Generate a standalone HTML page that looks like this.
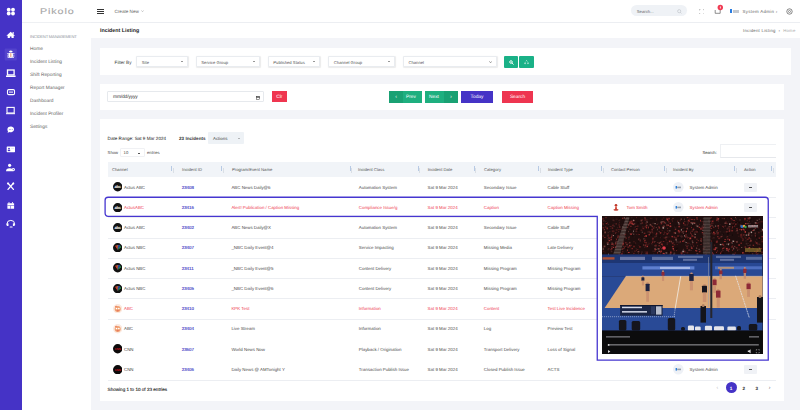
<!DOCTYPE html>
<html><head><meta charset="utf-8">
<style>
*{box-sizing:border-box;margin:0;padding:0}
html,body{width:800px;height:410px;overflow:hidden;background:#f3f4f8;font-family:"Liberation Sans",sans-serif;color:#444;text-rendering:geometricPrecision}
.a{position:absolute}
.t{position:absolute;white-space:nowrap;line-height:6px;height:6px}
#side{left:0;top:0;width:22px;height:410px;background:#4533c6}
#side2{left:22px;top:0;width:69px;height:410px;background:#fff}
#hdr{left:91px;top:0;width:709px;height:23px;background:#fff;border-bottom:1px solid #eceef2}
#title{left:91px;top:23px;width:709px;height:15px;background:#fff}
.card{position:absolute;background:#fff}
.sel{position:absolute;background:#fff;border:0.5px solid #e9ecf0;border-radius:1px;box-shadow:0.3px 0.6px 1px rgba(0,0,0,0.08)}
.sel span{position:absolute;left:4.8px;top:3.3px;font-size:4.2px;line-height:6px;color:#555;white-space:nowrap}
.sel i{position:absolute;right:4px;top:50%;margin-top:-0.5px;width:0;height:0;border-left:1.4px solid transparent;border-right:1.4px solid transparent;border-top:1.8px solid #333}
.btn{position:absolute;color:#fff;font-size:4.8px;line-height:11.4px;text-align:center;white-space:nowrap}
.menu .t{font-size:4.8px;color:#5f5f5f;left:8px}
.row{position:absolute;left:0;top:0;width:800px;height:0}
.c{position:absolute;top:-2.3px;font-size:4.4px;line-height:6px;white-space:nowrap}
.sep{position:absolute;left:107.6px;width:668.4px;height:0.6px;background:#eceef2}
.act{position:absolute;width:13.2px;height:9px;background:#f0f2f6;border-radius:1px}
.act i{position:absolute;left:5.4px;top:4.2px;width:2.6px;height:0.6px;background:#555}
.thd{position:absolute;left:0;top:0;width:800px;height:0}
.h{position:absolute;top:-3px;font-size:4.2px;line-height:6px;white-space:nowrap;color:#555}
.srt{position:absolute;top:-3.5px;width:2.6px;height:7px;background:linear-gradient(#7c9fd0,#7c9fd0) 0 0/0.5px 5px no-repeat,linear-gradient(#c3c9d2,#c3c9d2) 1.6px 2px/0.5px 5px no-repeat}
</style></head><body>
<!-- icon sidebar -->
<div id="side" class="a">
<svg class="a" style="left:0;top:0" width="22" height="240" viewBox="0 0 22 240">
  <g fill="#fff">
    <!-- logo -->
    <circle cx="8.7" cy="9.7" r="1.9"/><circle cx="13" cy="9.7" r="1.9"/>
    <circle cx="8.7" cy="13.5" r="1.9"/><circle cx="13" cy="13.5" r="1.9"/>
    <!-- home -->
    <path d="M6.4 35.7 L10.7 31.8 L15 35.7 L13.7 35.7 L13.7 38.1 L11.5 38.1 L11.5 36.6 L9.9 36.6 L9.9 38.1 L7.7 38.1 L7.7 35.7 Z"/><rect x="12.6" y="32" width="1.1" height="2.2"/>
  </g>
  <!-- bug active -->
  <rect x="4.7" y="48.5" width="12.1" height="12.1" rx="1" fill="#5343cc"/>
  <g fill="#fff">
    <path d="M9 51.4 Q10.8 49.6 12.6 51.4 L12.6 52 L9 52Z"/>
    <rect x="8.6" y="52.4" width="4.4" height="5.2" rx="1.8"/>
    <rect x="7.1" y="53.4" width="7.4" height="0.8"/>
    <rect x="7.1" y="55.6" width="7.4" height="0.8"/>
    <rect x="7.6" y="57.2" width="6.4" height="0.7"/>
  </g>
  <rect x="10.45" y="53.2" width="0.8" height="3.8" fill="#e0704a"/>
  <!-- laptop -->
  <rect x="7.5" y="70" width="6.6" height="4.9" fill="none" stroke="#fff" stroke-width="1.3"/>
  <path d="M6 75.4 H15.6 V76.4 Q15.6 76.9 15.1 76.9 H6.5 Q6 76.9 6 76.4Z" fill="#fff"/>
  <!-- router card -->
  <rect x="7.5" y="89.6" width="7" height="5" rx="1.2" fill="none" stroke="#fff" stroke-width="1.1"/>
  <rect x="9" y="91.6" width="4" height="1" fill="#fff"/>
  <!-- monitor -->
  <rect x="7" y="107.4" width="7.2" height="5.6" fill="none" stroke="#fff" stroke-width="1.1"/>
  <rect x="6" y="113.2" width="9" height="1" fill="#fff"/>
  <!-- chat -->
  <path d="M7.4 129.3 a3.35 2.9 0 1 1 1.8 2.6 L7.6 133 L8 131.4 a3 2.9 0 0 1 -0.6 -2.1Z" fill="#fff"/>
  <circle cx="9.3" cy="129.4" r="0.45" fill="#4533c6"/><circle cx="10.8" cy="129.4" r="0.45" fill="#4533c6"/><circle cx="12.3" cy="129.4" r="0.45" fill="#4533c6"/>
  <!-- id card -->
  <rect x="6.7" y="146.4" width="8.3" height="5.8" rx="0.6" fill="#fff"/>
  <circle cx="9" cy="148.6" r="0.9" fill="#4533c6"/>
  <rect x="7.8" y="149.8" width="2.4" height="1.3" fill="#4533c6"/>
  <rect x="11.2" y="148" width="2.8" height="0.6" fill="#d8d4f5"/>
  <!-- user gear -->
  <circle cx="9.6" cy="165.3" r="1.6" fill="#fff"/>
  <path d="M6 171.2 a3.6 3 0 0 1 7.2 0Z" fill="#fff"/>
  <circle cx="13.3" cy="169.6" r="1.7" fill="#fff"/>
  <circle cx="13.3" cy="169.6" r="0.6" fill="#4533c6"/>
  <!-- tools -->
  <g stroke="#fff" stroke-width="1.3" stroke-linecap="round">
    <line x1="8" y1="183.2" x2="13.4" y2="189.4"/>
    <line x1="13.4" y1="183.2" x2="8" y2="189.4"/>
  </g>
  <circle cx="8" cy="183.4" r="1" fill="#fff"/><circle cx="13.3" cy="183.4" r="1" fill="#fff"/>
  <!-- calendar -->
  <rect x="7.4" y="203.2" width="6.7" height="5.6" rx="0.5" fill="#fff"/>
  <rect x="8.6" y="202" width="0.8" height="1.6" fill="#fff"/><rect x="12.1" y="202" width="0.8" height="1.6" fill="#fff"/>
  <rect x="7.4" y="205.2" width="6.7" height="0.5" fill="#4533c6"/>
  <rect x="10.5" y="205.7" width="0.5" height="3.1" fill="#4533c6"/>
  <!-- support -->
  <path d="M7 225 v-1.2 a3.8 3.4 0 0 1 7.6 0 v1.2" fill="none" stroke="#fff" stroke-width="1"/>
  <rect x="6.7" y="223.3" width="1.8" height="2.8" rx="0.5" fill="#fff"/>
  <rect x="12.9" y="223.3" width="1.8" height="2.8" rx="0.5" fill="#fff"/>
  <rect x="9.6" y="226.5" width="3" height="1.1" rx="0.5" fill="#fff"/>
</svg>
</div>
<div id="side2" class="a menu">
  <div class="t" style="left:18px;top:7px;font-size:8.4px;line-height:8px;height:8px;color:#a6a6a6;letter-spacing:0.7px;transform:scaleX(1.28);transform-origin:0 0;-webkit-text-stroke:0.1px #a6a6a6">Pikolo</div>
  <div class="a" style="left:0;top:22px;width:69px;height:1px;background:#eef0f3"></div>
  <div class="t" style="top:34px;font-size:4.1px;color:#8a8f98;letter-spacing:-0.17px">INCIDENT MANAGEMENT</div>
  <div class="t" style="top:47.2px">Home</div>
  <div class="t" style="top:60.1px">Incident Listing</div>
  <div class="t" style="top:73px">Shift Reporting</div>
  <div class="t" style="top:85.8px">Report Manager</div>
  <div class="t" style="top:98.7px">Dashboard</div>
  <div class="t" style="top:111.6px">Incident Profiler</div>
  <div class="t" style="top:124.5px">Settings</div>
</div>
<!-- header -->
<div id="hdr" class="a">
  <div class="a" style="left:6px;top:9px;width:6.5px;height:1px;background:#333"></div>
  <div class="a" style="left:6px;top:11.2px;width:6.5px;height:1px;background:#333"></div>
  <div class="a" style="left:6px;top:13.4px;width:6.5px;height:1px;background:#333"></div>
  <div class="t" style="left:23.5px;top:9.2px;font-size:4.6px;color:#666">Create New</div><svg class="a" style="left:49.8px;top:10.2px" width="3" height="2.2" viewBox="0 0 3 2.2"><path d="M0.3 0.4 L1.5 1.7 L2.7 0.4" fill="none" stroke="#888" stroke-width="0.45"/></svg>
  <div class="a" style="left:540px;top:5.4px;width:55.5px;height:11px;border-radius:5.5px;background:#eff2f6"></div>
  <div class="t" style="left:545.8px;top:8.6px;font-size:4.2px;color:#666">Search...</div>
  <svg class="a" style="left:586.2px;top:8.6px" width="5" height="5" viewBox="0 0 5 5"><circle cx="2.2" cy="2.2" r="1.6" fill="none" stroke="#b5b9bf" stroke-width="0.5"/><line x1="3.3" y1="3.3" x2="4.5" y2="4.5" stroke="#b5b9bf" stroke-width="0.5"/></svg>
  <svg class="a" style="left:607.5px;top:8.7px" width="5.5" height="5.5" viewBox="0 0 5.5 5.5"><path d="M0.3 1.5 V0.3 H1.5 M4 0.3 H5.2 V1.5 M5.2 4 V5.2 H4 M1.5 5.2 H0.3 V4" fill="none" stroke="#8a8a8a" stroke-width="0.5"/></svg>
  <svg class="a" style="left:623px;top:3.5px" width="10" height="11" viewBox="0 0 10 11"><path d="M1.2 6 V9.3 H6.2 V6" fill="none" stroke="#444" stroke-width="0.6"/><circle cx="6.3" cy="3.5" r="2.7" fill="#f03a52"/><rect x="5.9" y="2.4" width="0.8" height="2.1" fill="#fff"/></svg>
  <div class="a" style="left:639px;top:8.9px;width:1.6px;height:4px;background:#2a7de1"></div>
  <div class="a" style="left:642px;top:9.5px;width:5.8px;height:3px;background:#c5c9cf"></div>
  <div class="t" style="left:651.6px;top:9.1px;font-size:4.4px;color:#666;letter-spacing:0.3px">System Admin &#8250;</div>
  <svg class="a" style="left:694.5px;top:8px" width="7" height="7" viewBox="0 0 7 7"><circle cx="3.5" cy="3.5" r="2.7" fill="none" stroke="#555" stroke-width="0.7"/><circle cx="3.5" cy="3.5" r="1" fill="none" stroke="#555" stroke-width="0.6"/></svg>
</div>
<div id="title" class="a">
  
</div>
<div class="t" style="left:100px;top:28px;font-size:5.3px;font-weight:bold;color:#222">Incident Listing</div>
<div class="t" style="left:743px;top:27.6px;font-size:4.3px;color:#666;letter-spacing:0.25px">Incident Listing &nbsp;&#8250;&nbsp; <span style="color:#aaa">Home</span></div>

<!-- filter card -->
<div class="card" style="left:100px;top:48px;width:691px;height:27px"></div>
<div class="t" style="left:114.6px;top:59.6px;font-size:4.6px;color:#3a3a3a">Filter By</div>
<div class="sel" style="left:136px;top:55.6px;width:51.6px;height:11.8px"><span>Site</span><i></i></div>
<div class="sel" style="left:195.5px;top:55.6px;width:64px;height:11.8px"><span>Service Group</span><i></i></div>
<div class="sel" style="left:267.5px;top:55.6px;width:52.5px;height:11.8px"><span>Published Status</span><i></i></div>
<div class="sel" style="left:328px;top:55.6px;width:66.5px;height:11.8px"><span>Channel Group</span><i></i></div>
<div class="sel" style="left:402.6px;top:55.6px;width:94px;height:11.8px"><span>Channel</span>
  <svg class="a" style="right:3.5px;top:4.5px" width="3.2" height="2.2" viewBox="0 0 3.2 2.2"><path d="M0.3 0.3 L1.6 1.8 L2.9 0.3" fill="none" stroke="#444" stroke-width="0.5"/></svg></div>
<div class="btn" style="left:503.8px;top:56.4px;width:14.2px;height:11.4px;background:#1ab187;border-radius:1px">
  <svg class="a" style="left:4.8px;top:3.6px" width="5" height="5" viewBox="0 0 5 5"><circle cx="2" cy="2" r="1.3" fill="none" stroke="#fff" stroke-width="0.9"/><line x1="3" y1="3" x2="4.3" y2="4.3" stroke="#fff" stroke-width="0.9" stroke-linecap="round"/></svg></div>
<div class="btn" style="left:519px;top:56.4px;width:15px;height:11.4px;background:#1ab187;border-radius:1px">
  <svg class="a" style="left:5px;top:3.2px" width="5" height="5" viewBox="0 0 5 5"><path d="M1.9 1.2 L2.5 0.5 L3.3 1.5 M3.9 2.2 L4.4 3.6 L3.2 3.6 M1.9 3.6 L0.6 3.6 L1.3 2.2" fill="none" stroke="#fff" stroke-width="0.6"/></svg></div>

<!-- date card -->
<div class="card" style="left:100px;top:83.6px;width:684px;height:26.6px"></div>
<div class="sel" style="left:107.4px;top:91px;width:157px;height:11.4px;border-color:#e6e9ed;box-shadow:none"><span style="left:4.6px;top:2.6px;font-size:4.9px;color:#333;letter-spacing:-0.15px">mm/dd/yyyy</span>
  <svg class="a" style="left:148px;top:3.5px" width="4" height="4" viewBox="0 0 4 4"><rect x="0.3" y="0.6" width="3.4" height="3.1" fill="none" stroke="#333" stroke-width="0.5"/><rect x="0.3" y="0.6" width="3.4" height="1" fill="#333"/></svg></div>
<div class="btn" style="left:271.9px;top:91.2px;width:15px;height:11.3px;background:#ef3650;line-height:14.4px">Clr</div>
<div class="btn" style="left:389px;top:91px;width:32.6px;height:11.6px;background:#1eaf7f;line-height:14.6px">
  <div class="a" style="left:0;top:0;width:14px;height:11.6px;background:#19a173">&#8249;</div><span style="position:absolute;left:17px">Prev</span></div>
<div class="btn" style="left:425px;top:91px;width:33px;height:11.6px;background:#1eaf7f;line-height:14.6px">
  <span style="position:absolute;left:4px">Next</span><div class="a" style="right:0;top:0;width:14px;height:11.6px;background:#19a173">&#8250;</div></div>
<div class="btn" style="left:461px;top:91px;width:32px;height:11.6px;background:#4533c6;line-height:14.6px">Today</div>
<div class="btn" style="left:502px;top:91px;width:31px;height:11.6px;background:#ee3550;line-height:14.6px">Search</div>

<!-- table card -->
<div class="card" style="left:100px;top:118.8px;width:684px;height:282.4px"></div>
<div class="t" style="left:107.6px;top:135.9px;font-size:4.6px;color:#222">Date Range: Sat 9 Mar 2024</div>
<div class="t" style="left:179px;top:135.9px;font-size:4.6px;font-weight:bold;color:#3a3a3a">23 Incidents</div>
<div class="a" style="left:208.4px;top:132px;width:36px;height:11.6px;background:#eef2f6;border-radius:1px"></div>
<div class="t" style="left:213px;top:135.9px;font-size:4.4px;color:#444">Actions</div>
<div class="a" style="left:238px;top:138.2px;width:0;height:0;border-left:0.9px solid transparent;border-right:0.9px solid transparent;border-top:1.1px solid #777"></div>
<div class="t" style="left:107.6px;top:150px;font-size:4.2px;color:#444">Show</div>
<div class="a" style="left:119.6px;top:147.8px;width:25.4px;height:9.4px;border:0.5px solid #f0f1f4;border-radius:1px;background:#fff"></div>
<div class="t" style="left:123.6px;top:150px;font-size:4.2px;color:#444">10</div>
<div class="a" style="left:137.8px;top:152.7px;width:2.2px;height:0.6px;background:#555"></div>
<div class="t" style="left:147px;top:150px;font-size:4.2px;color:#444">entries</div>
<div class="t" style="left:702.4px;top:149.6px;font-size:4.2px;color:#333">Search:</div>
<div class="a" style="left:719.5px;top:144px;width:56.5px;height:13.5px;border:0.5px solid #eef0f3;border-right:none;border-bottom-color:#e6e8ec;background:#fff"></div>
<!-- header row -->
<div class="a" style="left:107.6px;top:162px;width:668.4px;height:15px;background:#f1f4f8"></div>
<div class="thd" style="top:169.5px">
  <span class="h" style="left:112px">Channel</span><b class="srt" style="left:171.2px"></b>
  <span class="h" style="left:182px">Incident ID</span><b class="srt" style="left:221px"></b>
  <span class="h" style="left:232px">Program/Event Name</span><b class="srt" style="left:349.6px"></b>
  <span class="h" style="left:358px">Incident Class</span><b class="srt" style="left:417.8px"></b>
  <span class="h" style="left:427.7px">Incident Date</span><b class="srt" style="left:473.6px"></b>
  <span class="h" style="left:484px">Category</span><b class="srt" style="left:538px"></b>
  <span class="h" style="left:548px">Incident Type</span><b class="srt" style="left:601px"></b>
  <span class="h" style="left:611px">Contact Person</span><b class="srt" style="left:664px"></b>
  <span class="h" style="left:673px">Incident By</span><b class="srt" style="left:734px"></b>
  <span class="h" style="left:744px">Action</span><b class="srt" style="left:771px"></b>
</div>
<div class="row" style="top:186.90px"><svg class="a" style="left:112.7px;top:-4.6px" width="9.4" height="9.4" viewBox="0 0 10 10"><circle cx="5" cy="5" r="5" fill="#111"/><text x="5" y="6.5" font-size="4.3" font-weight="bold" fill="#fff" text-anchor="middle" font-family="Liberation Sans" letter-spacing="-0.2">abc</text></svg><span class="c" style="left:124px;color:#484848">Actus ABC</span><span class="c" style="left:181.7px;color:#3a33c4;-webkit-text-stroke:0.12px #3a33c4">23408</span><span class="c" style="left:231.4px;color:#4a4a4a">ABC News Daily@6</span><span class="c" style="left:358.8px;color:#4a4a4a">Automation System</span><span class="c" style="left:427.6px;color:#4a4a4a">Sat 9 Mar 2024</span><span class="c" style="left:483.8px;color:#4a4a4a">Secondary Issue</span><span class="c" style="left:547.6px;color:#4a4a4a">Cable Stuff</span><svg class="a" style="left:673px;top:-5.3px" width="10.6" height="10.6" viewBox="0 0 10.6 10.6"><circle cx="5.3" cy="5.3" r="5.3" fill="#eef1f6"/><rect x="2.6" y="4" width="1.4" height="2.6" fill="#2c7fd9"/><rect x="4.2" y="4.6" width="3.8" height="1.6" fill="#9aa3ad"/></svg><span class="c" style="left:689.6px;color:#4a4a4a">System Admin</span><div class="act" style="left:744px;top:-4.4px"><i></i></div></div>
<div class="sep" style="top:197.03px"></div>
<div class="row" style="top:207.16px"><svg class="a" style="left:112.7px;top:-4.6px" width="9.4" height="9.4" viewBox="0 0 10 10"><circle cx="5" cy="5" r="5" fill="#111"/><text x="5" y="6.5" font-size="4.3" font-weight="bold" fill="#fff" text-anchor="middle" font-family="Liberation Sans" letter-spacing="-0.2">abc</text></svg><span class="c" style="left:124px;color:#ee3a4f">ActusABC</span><span class="c" style="left:181.7px;color:#3a33c4;-webkit-text-stroke:0.12px #3a33c4">23416</span><span class="c" style="left:231.4px;color:#ee3a4f">Alert! Publication / Caption Missing</span><span class="c" style="left:358.8px;color:#ee3a4f">Compliance Issue/g</span><span class="c" style="left:427.6px;color:#ee3a4f">Sat 9 Mar 2024</span><span class="c" style="left:483.8px;color:#ee3a4f">Caption</span><span class="c" style="left:547.6px;color:#ee3a4f">Caption Missing</span><svg class="a" style="left:612px;top:-4.2px" width="8" height="8" viewBox="0 0 8 8"><circle cx="4" cy="2.2" r="1.3" fill="#c0392b"/><path d="M3.3 3.4 L4.7 3.4 L5 6 L3 6Z" fill="#d64534"/><ellipse cx="4" cy="6.8" rx="2.6" ry="0.9" fill="#c0392b"/></svg><span class="c" style="left:626.6px;color:#ee3a4f">Tom Smith</span><svg class="a" style="left:673px;top:-5.3px" width="10.6" height="10.6" viewBox="0 0 10.6 10.6"><circle cx="5.3" cy="5.3" r="5.3" fill="#eef1f6"/><rect x="2.6" y="4" width="1.4" height="2.6" fill="#2c7fd9"/><rect x="4.2" y="4.6" width="3.8" height="1.6" fill="#9aa3ad"/></svg><span class="c" style="left:689.6px;color:#ee3a4f">System Admin</span><div class="act" style="left:744px;top:-4.4px"><i></i></div></div>
<div class="sep" style="top:217.29px"></div>
<div class="row" style="top:227.42px"><svg class="a" style="left:112.7px;top:-4.6px" width="9.4" height="9.4" viewBox="0 0 10 10"><circle cx="5" cy="5" r="5" fill="#111"/><text x="5" y="6.5" font-size="4.3" font-weight="bold" fill="#fff" text-anchor="middle" font-family="Liberation Sans" letter-spacing="-0.2">abc</text></svg><span class="c" style="left:124px;color:#484848">Actus ABC</span><span class="c" style="left:181.7px;color:#3a33c4;-webkit-text-stroke:0.12px #3a33c4">23402</span><span class="c" style="left:231.4px;color:#4a4a4a">ABC News Daily@X</span><span class="c" style="left:358.8px;color:#4a4a4a">Automation System</span><span class="c" style="left:427.6px;color:#4a4a4a">Sat 9 Mar 2024</span><span class="c" style="left:483.8px;color:#4a4a4a">Secondary Issue</span><span class="c" style="left:547.6px;color:#4a4a4a">Cable Stuff</span></div>
<div class="sep" style="top:237.55px"></div>
<div class="row" style="top:247.68px"><svg class="a" style="left:112.7px;top:-4.6px" width="9.4" height="9.4" viewBox="0 0 10 10"><circle cx="5" cy="5" r="5" fill="#111"/><path d="M5 7.5 L2.2 3 L3.8 2.6Z" fill="#e8362c"/><path d="M5 7.5 L3.8 2.2 L5 2Z" fill="#f39c1f"/><path d="M5 7.5 L5 2 L6.2 2.2Z" fill="#7b3fa0"/><path d="M5 7.5 L6.2 2.2 L7.8 2.6Z" fill="#1d5fb8"/><path d="M5 7.5 L7.8 3 L8.6 4.6Z" fill="#2aa44a"/></svg><span class="c" style="left:124px;color:#484848">Actus NBC</span><span class="c" style="left:181.7px;color:#3a33c4;-webkit-text-stroke:0.12px #3a33c4">23407</span><span class="c" style="left:231.4px;color:#4a4a4a">_NBC Daily Event@4</span><span class="c" style="left:358.8px;color:#4a4a4a">Service Impacting</span><span class="c" style="left:427.6px;color:#4a4a4a">Sat 9 Mar 2024</span><span class="c" style="left:483.8px;color:#4a4a4a">Missing Media</span><span class="c" style="left:547.6px;color:#4a4a4a">Late Delivery</span></div>
<div class="sep" style="top:257.81px"></div>
<div class="row" style="top:267.94px"><svg class="a" style="left:112.7px;top:-4.6px" width="9.4" height="9.4" viewBox="0 0 10 10"><circle cx="5" cy="5" r="5" fill="#111"/><path d="M5 7.5 L2.2 3 L3.8 2.6Z" fill="#e8362c"/><path d="M5 7.5 L3.8 2.2 L5 2Z" fill="#f39c1f"/><path d="M5 7.5 L5 2 L6.2 2.2Z" fill="#7b3fa0"/><path d="M5 7.5 L6.2 2.2 L7.8 2.6Z" fill="#1d5fb8"/><path d="M5 7.5 L7.8 3 L8.6 4.6Z" fill="#2aa44a"/></svg><span class="c" style="left:124px;color:#484848">Actus NBC</span><span class="c" style="left:181.7px;color:#3a33c4;-webkit-text-stroke:0.12px #3a33c4">23411</span><span class="c" style="left:231.4px;color:#4a4a4a">_NBC Daily Event@5</span><span class="c" style="left:358.8px;color:#4a4a4a">Content Delivery</span><span class="c" style="left:427.6px;color:#4a4a4a">Sat 9 Mar 2024</span><span class="c" style="left:483.8px;color:#4a4a4a">Missing Program</span><span class="c" style="left:547.6px;color:#4a4a4a">Missing Program</span></div>
<div class="sep" style="top:278.07px"></div>
<div class="row" style="top:288.20px"><svg class="a" style="left:112.7px;top:-4.6px" width="9.4" height="9.4" viewBox="0 0 10 10"><circle cx="5" cy="5" r="5" fill="#111"/><path d="M5 7.5 L2.2 3 L3.8 2.6Z" fill="#e8362c"/><path d="M5 7.5 L3.8 2.2 L5 2Z" fill="#f39c1f"/><path d="M5 7.5 L5 2 L6.2 2.2Z" fill="#7b3fa0"/><path d="M5 7.5 L6.2 2.2 L7.8 2.6Z" fill="#1d5fb8"/><path d="M5 7.5 L7.8 3 L8.6 4.6Z" fill="#2aa44a"/></svg><span class="c" style="left:124px;color:#484848">Actus NBC</span><span class="c" style="left:181.7px;color:#3a33c4;-webkit-text-stroke:0.12px #3a33c4">23405</span><span class="c" style="left:231.4px;color:#4a4a4a">_NBC Daily Event@6</span><span class="c" style="left:358.8px;color:#4a4a4a">Content Delivery</span><span class="c" style="left:427.6px;color:#4a4a4a">Sat 9 Mar 2024</span><span class="c" style="left:483.8px;color:#4a4a4a">Missing Program</span><span class="c" style="left:547.6px;color:#4a4a4a">Missing Program</span></div>
<div class="sep" style="top:298.33px"></div>
<div class="row" style="top:308.46px"><svg class="a" style="left:112.7px;top:-4.6px" width="9.4" height="9.4" viewBox="0 0 10 10"><circle cx="5" cy="5" r="5" fill="#fbe9df"/><circle cx="5" cy="5.4" r="3.2" fill="#f0a070"/><circle cx="3.8" cy="4.8" r="0.9" fill="#fff"/><circle cx="6.2" cy="4.8" r="0.9" fill="#fff"/><path d="M3.5 7 Q5 8.3 6.5 7" fill="#d9534f"/><path d="M2 3 L3.5 1.5 L4 3.5Z" fill="#e87050"/></svg><span class="c" style="left:124px;color:#ee3a4f">ABC</span><span class="c" style="left:181.7px;color:#3a33c4;-webkit-text-stroke:0.12px #3a33c4">23410</span><span class="c" style="left:231.4px;color:#ee3a4f">KPK Test</span><span class="c" style="left:358.8px;color:#ee3a4f">Information</span><span class="c" style="left:427.6px;color:#ee3a4f">Sat 9 Mar 2024</span><span class="c" style="left:483.8px;color:#ee3a4f">Content</span><span class="c" style="left:547.6px;color:#ee3a4f">Test Live Incidence</span></div>
<div class="sep" style="top:318.59px"></div>
<div class="row" style="top:328.72px"><svg class="a" style="left:112.7px;top:-4.6px" width="9.4" height="9.4" viewBox="0 0 10 10"><circle cx="5" cy="5" r="5" fill="#fbe9df"/><circle cx="5" cy="5.4" r="3.2" fill="#f0a070"/><circle cx="3.8" cy="4.8" r="0.9" fill="#fff"/><circle cx="6.2" cy="4.8" r="0.9" fill="#fff"/><path d="M3.5 7 Q5 8.3 6.5 7" fill="#d9534f"/><path d="M2 3 L3.5 1.5 L4 3.5Z" fill="#e87050"/></svg><span class="c" style="left:124px;color:#484848">ABC</span><span class="c" style="left:181.7px;color:#3a33c4;-webkit-text-stroke:0.12px #3a33c4">23404</span><span class="c" style="left:231.4px;color:#4a4a4a">Live Stream</span><span class="c" style="left:358.8px;color:#4a4a4a">Information</span><span class="c" style="left:427.6px;color:#4a4a4a">Sat 9 Mar 2024</span><span class="c" style="left:483.8px;color:#4a4a4a">Log</span><span class="c" style="left:547.6px;color:#4a4a4a">Preview Test</span></div>

<div class="row" style="top:348.98px"><svg class="a" style="left:112.7px;top:-4.6px" width="9.4" height="9.4" viewBox="0 0 10 10"><circle cx="5" cy="5" r="5" fill="#0c0a0a"/><text x="5" y="6.2" font-size="3" font-weight="bold" fill="#c8141e" text-anchor="middle" font-family="Liberation Sans">CNN</text></svg><span class="c" style="left:124px;color:#484848">CNN</span><span class="c" style="left:181.7px;color:#3a33c4;-webkit-text-stroke:0.12px #3a33c4">23607</span><span class="c" style="left:231.4px;color:#4a4a4a">World News Now</span><span class="c" style="left:358.8px;color:#4a4a4a">Playback / Origination</span><span class="c" style="left:427.6px;color:#4a4a4a">Sat 9 Mar 2024</span><span class="c" style="left:483.8px;color:#4a4a4a">Transport Delivery</span><span class="c" style="left:547.6px;color:#4a4a4a">Loss of Signal</span></div>

<div class="row" style="top:369.24px"><svg class="a" style="left:112.7px;top:-4.6px" width="9.4" height="9.4" viewBox="0 0 10 10"><circle cx="5" cy="5" r="5" fill="#0c0a0a"/><text x="5" y="6.2" font-size="3" font-weight="bold" fill="#c8141e" text-anchor="middle" font-family="Liberation Sans">CNN</text></svg><span class="c" style="left:124px;color:#484848">CNN</span><span class="c" style="left:181.7px;color:#3a33c4;-webkit-text-stroke:0.12px #3a33c4">23406</span><span class="c" style="left:231.4px;color:#4a4a4a">Daily News @ AMTonight Y</span><span class="c" style="left:358.8px;color:#4a4a4a">Transaction Publish Issue</span><span class="c" style="left:427.6px;color:#4a4a4a">Sat 9 Mar 2024</span><span class="c" style="left:483.8px;color:#4a4a4a">Closed Publish Issue</span><span class="c" style="left:547.6px;color:#4a4a4a">ACTS</span><svg class="a" style="left:673px;top:-5.3px" width="10.6" height="10.6" viewBox="0 0 10.6 10.6"><circle cx="5.3" cy="5.3" r="5.3" fill="#eef1f6"/><rect x="2.6" y="4" width="1.4" height="2.6" fill="#2c7fd9"/><rect x="4.2" y="4.6" width="3.8" height="1.6" fill="#9aa3ad"/></svg><span class="c" style="left:689.6px;color:#4a4a4a">System Admin</span><div class="act" style="left:744px;top:-4.4px"><i></i></div></div>
<div class="sep" style="top:379.64px"></div>
<div class="t" style="left:107.6px;top:386.6px;font-size:4.6px;color:#222;-webkit-text-stroke:0.1px #222">Showing 1 to 10 of 23 entries</div>
<div class="t" style="left:716.5px;top:385px;font-size:5px;color:#bbb">&#8249;</div>
<div class="a" style="left:726.2px;top:382.2px;width:11px;height:11px;border-radius:50%;background:#4533c6"></div>
<div class="t" style="left:729.8px;top:385.5px;font-size:4.6px;color:#fff;font-weight:bold">1</div>
<div class="t" style="left:742.6px;top:385.5px;font-size:4.6px;color:#333;font-weight:bold">2</div>
<div class="t" style="left:755.6px;top:385.5px;font-size:4.6px;color:#333;font-weight:bold">3</div>
<div class="t" style="left:768.8px;top:385px;font-size:5px;color:#666">&#8250;</div>
<!-- highlight row box -->

<!-- video frame -->
<div class="a" style="left:597.6px;top:216.6px;width:170.2px;height:143.2px;background:#fff"></div>
<div class="a" style="left:602.2px;top:216px;width:160.6px;height:138.3px;background:#1f0e0e;overflow:hidden">
<svg width="160.6" height="137.5" viewBox="0 0 160.6 137.5" style="position:absolute;left:0;top:0.8px"><rect x="0" y="0" width="160.6" height="37.6" fill="#1f0e0e"/><rect x="52.0" y="5.6" width="0.8" height="1.3" fill="#6e3a36"/><rect x="58.7" y="2.2" width="0.7" height="1.2" fill="#2a1414"/><rect x="11.2" y="3.4" width="1.6" height="0.8" fill="#4a1a1a"/><rect x="35.9" y="23.5" width="1.3" height="1.1" fill="#140808"/><rect x="156.8" y="1.7" width="1.0" height="0.9" fill="#7c5c56"/><rect x="18.9" y="11.5" width="0.9" height="1.3" fill="#3d2222"/><rect x="102.6" y="13.9" width="0.8" height="0.8" fill="#2a1414"/><rect x="33.1" y="25.4" width="1.0" height="1.3" fill="#4a1a1a"/><rect x="72.8" y="11.2" width="1.5" height="1.0" fill="#3d2222"/><rect x="92.3" y="19.6" width="1.5" height="1.0" fill="#7c5c56"/><rect x="157.4" y="4.4" width="1.5" height="0.9" fill="#4a1a1a"/><rect x="78.5" y="1.5" width="1.5" height="1.3" fill="#6e3a36"/><rect x="140.6" y="11.7" width="1.4" height="1.3" fill="#b03838"/><rect x="73.3" y="31.4" width="1.2" height="1.4" fill="#140808"/><rect x="9.7" y="26.2" width="1.8" height="1.6" fill="#6e3a36"/><rect x="45.7" y="14.4" width="0.7" height="1.2" fill="#6e3a36"/><rect x="27.0" y="4.4" width="1.5" height="0.8" fill="#5a1f1f"/><rect x="39.8" y="14.6" width="0.8" height="1.2" fill="#7c5c56"/><rect x="88.2" y="33.0" width="1.7" height="1.0" fill="#3d2222"/><rect x="66.7" y="13.4" width="1.8" height="0.9" fill="#7c5c56"/><rect x="28.3" y="8.7" width="1.2" height="1.3" fill="#7a2626"/><rect x="42.2" y="0.2" width="1.1" height="1.3" fill="#4a1a1a"/><rect x="153.1" y="25.8" width="1.4" height="1.4" fill="#2a1414"/><rect x="8.7" y="33.6" width="1.7" height="1.6" fill="#3d2222"/><rect x="63.0" y="14.9" width="1.4" height="0.8" fill="#5a1f1f"/><rect x="10.8" y="7.8" width="1.1" height="0.8" fill="#7a2626"/><rect x="0.0" y="5.7" width="1.1" height="0.7" fill="#5a1f1f"/><rect x="140.4" y="23.0" width="1.0" height="1.1" fill="#7a2626"/><rect x="58.5" y="4.6" width="1.8" height="1.2" fill="#7c5c56"/><rect x="77.7" y="3.2" width="1.1" height="1.0" fill="#5a1f1f"/><rect x="133.1" y="6.0" width="1.7" height="1.3" fill="#5a1f1f"/><rect x="23.5" y="20.3" width="1.3" height="1.8" fill="#5a1f1f"/><rect x="138.6" y="26.0" width="1.1" height="0.9" fill="#9a2c2c"/><rect x="124.0" y="19.9" width="1.1" height="0.9" fill="#3d2222"/><rect x="130.3" y="36.8" width="1.6" height="1.6" fill="#7c5c56"/><rect x="118.8" y="8.5" width="1.1" height="0.7" fill="#2a1414"/><rect x="4.5" y="10.5" width="1.5" height="1.8" fill="#7a2626"/><rect x="71.8" y="35.0" width="1.8" height="1.1" fill="#140808"/><rect x="35.4" y="8.5" width="0.9" height="1.4" fill="#7a2626"/><rect x="144.6" y="31.4" width="1.4" height="1.6" fill="#2a1414"/><rect x="13.6" y="24.7" width="1.6" height="1.5" fill="#b09690"/><rect x="76.8" y="6.7" width="1.1" height="1.6" fill="#3d2222"/><rect x="156.0" y="14.8" width="1.7" height="1.5" fill="#4a1a1a"/><rect x="27.3" y="4.8" width="1.7" height="1.6" fill="#7a2626"/><rect x="23.5" y="30.9" width="1.4" height="1.1" fill="#140808"/><rect x="88.1" y="4.9" width="1.8" height="1.4" fill="#5a1f1f"/><rect x="84.6" y="34.9" width="1.7" height="1.6" fill="#4a1a1a"/><rect x="33.9" y="9.4" width="1.0" height="1.3" fill="#9a2c2c"/><rect x="41.7" y="15.7" width="1.7" height="1.1" fill="#7a2626"/><rect x="73.6" y="21.8" width="1.2" height="1.7" fill="#b09690"/><rect x="80.6" y="19.9" width="0.7" height="1.2" fill="#2a1414"/><rect x="29.4" y="0.1" width="0.9" height="1.2" fill="#3d2222"/><rect x="116.5" y="20.8" width="1.3" height="1.3" fill="#9a2c2c"/><rect x="126.0" y="4.0" width="1.0" height="1.0" fill="#2a1414"/><rect x="124.0" y="19.0" width="1.5" height="1.7" fill="#2a1414"/><rect x="71.2" y="22.9" width="1.3" height="1.5" fill="#2a1414"/><rect x="72.6" y="19.9" width="1.7" height="1.5" fill="#4a1a1a"/><rect x="140.8" y="35.2" width="1.3" height="1.7" fill="#7a2626"/><rect x="134.9" y="5.1" width="1.2" height="0.8" fill="#5a1f1f"/><rect x="38.6" y="2.7" width="1.6" height="1.7" fill="#6e3a36"/><rect x="24.8" y="26.8" width="0.9" height="1.7" fill="#6e3a36"/><rect x="155.4" y="8.2" width="1.1" height="1.2" fill="#140808"/><rect x="159.0" y="31.1" width="1.2" height="1.3" fill="#7a2626"/><rect x="54.5" y="7.3" width="1.5" height="0.7" fill="#9a2c2c"/><rect x="89.0" y="16.5" width="1.1" height="1.4" fill="#5a1f1f"/><rect x="82.3" y="2.4" width="1.6" height="1.8" fill="#140808"/><rect x="16.8" y="9.9" width="1.6" height="1.0" fill="#5a1f1f"/><rect x="20.8" y="15.8" width="1.6" height="1.0" fill="#b09690"/><rect x="24.0" y="34.4" width="1.5" height="0.8" fill="#2a1414"/><rect x="9.2" y="25.7" width="0.8" height="1.7" fill="#4a1a1a"/><rect x="101.9" y="30.0" width="1.6" height="0.8" fill="#5a1f1f"/><rect x="138.6" y="17.0" width="1.3" height="1.7" fill="#9a2c2c"/><rect x="43.0" y="4.8" width="1.0" height="0.8" fill="#2a1414"/><rect x="25.9" y="1.9" width="1.0" height="1.0" fill="#7a2626"/><rect x="122.0" y="10.8" width="0.9" height="1.1" fill="#2a1414"/><rect x="2.9" y="9.4" width="1.5" height="1.3" fill="#5a1f1f"/><rect x="30.4" y="17.8" width="0.8" height="1.6" fill="#140808"/><rect x="69.4" y="18.5" width="1.1" height="1.3" fill="#3d2222"/><rect x="110.5" y="36.7" width="1.6" height="1.5" fill="#9a2c2c"/><rect x="102.1" y="15.1" width="0.8" height="0.8" fill="#9a2c2c"/><rect x="11.4" y="27.7" width="0.9" height="0.8" fill="#7a2626"/><rect x="135.1" y="32.6" width="1.0" height="1.0" fill="#6e3a36"/><rect x="47.1" y="17.2" width="1.2" height="1.0" fill="#7a2626"/><rect x="154.5" y="36.4" width="1.0" height="1.8" fill="#2a1414"/><rect x="49.7" y="13.3" width="1.1" height="1.2" fill="#5a1f1f"/><rect x="80.7" y="7.5" width="0.7" height="1.0" fill="#2a1414"/><rect x="14.4" y="14.9" width="0.7" height="1.0" fill="#5a1f1f"/><rect x="37.4" y="21.9" width="1.5" height="1.4" fill="#2a1414"/><rect x="115.0" y="32.9" width="1.1" height="1.8" fill="#4a1a1a"/><rect x="24.0" y="27.1" width="0.7" height="1.6" fill="#6e3a36"/><rect x="143.2" y="23.5" width="1.6" height="0.9" fill="#3d2222"/><rect x="84.1" y="18.9" width="1.6" height="1.6" fill="#3d2222"/><rect x="93.8" y="33.4" width="1.5" height="1.0" fill="#b03838"/><rect x="5.0" y="5.0" width="0.8" height="1.6" fill="#4a1a1a"/><rect x="89.7" y="23.5" width="1.4" height="1.2" fill="#6e3a36"/><rect x="0.5" y="29.8" width="1.3" height="1.3" fill="#3d2222"/><rect x="105.9" y="2.5" width="1.0" height="0.8" fill="#3d2222"/><rect x="42.6" y="27.3" width="1.5" height="1.8" fill="#7a2626"/><rect x="79.3" y="14.3" width="1.5" height="1.5" fill="#4a1a1a"/><rect x="99.1" y="24.0" width="0.9" height="1.0" fill="#5a1f1f"/><rect x="119.4" y="11.4" width="0.7" height="0.8" fill="#2a1414"/><rect x="43.2" y="25.1" width="1.4" height="1.0" fill="#b03838"/><rect x="83.0" y="17.4" width="0.8" height="1.7" fill="#4a1a1a"/><rect x="32.0" y="36.6" width="0.7" height="1.2" fill="#140808"/><rect x="131.7" y="36.2" width="1.0" height="0.9" fill="#4a1a1a"/><rect x="151.9" y="7.9" width="0.9" height="1.3" fill="#2a1414"/><rect x="153.0" y="5.0" width="1.3" height="1.7" fill="#3d2222"/><rect x="113.0" y="8.7" width="1.2" height="0.7" fill="#b09690"/><rect x="0.6" y="18.4" width="1.0" height="0.9" fill="#4a1a1a"/><rect x="55.2" y="11.8" width="0.7" height="1.5" fill="#7c5c56"/><rect x="134.8" y="4.5" width="1.5" height="1.7" fill="#140808"/><rect x="46.5" y="13.9" width="1.8" height="1.3" fill="#4a1a1a"/><rect x="57.9" y="16.0" width="0.8" height="0.8" fill="#9a2c2c"/><rect x="134.0" y="10.7" width="1.0" height="1.0" fill="#140808"/><rect x="82.1" y="7.1" width="1.8" height="1.7" fill="#4a1a1a"/><rect x="130.4" y="23.6" width="1.7" height="1.3" fill="#b09690"/><rect x="115.6" y="1.9" width="1.2" height="1.5" fill="#3d2222"/><rect x="103.5" y="10.7" width="1.7" height="0.8" fill="#5a1f1f"/><rect x="75.8" y="12.9" width="1.5" height="1.8" fill="#9a2c2c"/><rect x="41.8" y="24.5" width="1.3" height="1.1" fill="#9a2c2c"/><rect x="26.9" y="6.0" width="1.7" height="1.2" fill="#7a2626"/><rect x="35.3" y="33.9" width="1.2" height="0.9" fill="#140808"/><rect x="30.9" y="3.4" width="0.8" height="1.0" fill="#9a2c2c"/><rect x="41.5" y="21.3" width="1.5" height="1.2" fill="#7c5c56"/><rect x="66.5" y="19.6" width="1.1" height="0.8" fill="#4a1a1a"/><rect x="44.6" y="36.2" width="1.3" height="1.4" fill="#7a2626"/><rect x="138.6" y="8.1" width="1.0" height="1.1" fill="#9a2c2c"/><rect x="71.6" y="35.7" width="1.7" height="0.7" fill="#7c5c56"/><rect x="5.2" y="26.5" width="1.2" height="1.3" fill="#b09690"/><rect x="0.0" y="14.6" width="1.6" height="1.6" fill="#140808"/><rect x="156.1" y="9.3" width="0.9" height="1.3" fill="#5a1f1f"/><rect x="109.5" y="35.2" width="1.4" height="1.5" fill="#b03838"/><rect x="73.4" y="20.6" width="1.6" height="1.0" fill="#5a1f1f"/><rect x="147.7" y="24.1" width="0.8" height="1.0" fill="#9a2c2c"/><rect x="102.2" y="26.1" width="0.8" height="1.3" fill="#5a1f1f"/><rect x="93.6" y="14.5" width="1.4" height="0.7" fill="#7a2626"/><rect x="48.4" y="17.2" width="1.4" height="1.7" fill="#140808"/><rect x="76.3" y="8.8" width="1.8" height="1.5" fill="#7a2626"/><rect x="49.4" y="0.8" width="1.4" height="1.2" fill="#2a1414"/><rect x="41.3" y="25.0" width="0.9" height="0.7" fill="#140808"/><rect x="54.3" y="15.7" width="0.9" height="1.6" fill="#b03838"/><rect x="118.7" y="18.9" width="1.8" height="1.0" fill="#7a2626"/><rect x="131.7" y="8.6" width="1.5" height="1.0" fill="#7a2626"/><rect x="152.9" y="18.5" width="0.9" height="1.2" fill="#7a2626"/><rect x="106.8" y="35.5" width="1.1" height="0.9" fill="#7a2626"/><rect x="156.4" y="5.3" width="0.8" height="1.1" fill="#5a1f1f"/><rect x="144.2" y="33.0" width="1.8" height="1.7" fill="#3d2222"/><rect x="52.9" y="6.9" width="1.5" height="0.7" fill="#140808"/><rect x="106.7" y="14.2" width="1.1" height="0.9" fill="#4a1a1a"/><rect x="0.5" y="10.5" width="1.8" height="0.8" fill="#9a2c2c"/><rect x="154.9" y="7.8" width="1.6" height="1.6" fill="#4a1a1a"/><rect x="69.5" y="1.8" width="1.1" height="1.7" fill="#4a1a1a"/><rect x="31.0" y="13.6" width="0.7" height="1.2" fill="#b09690"/><rect x="130.4" y="28.7" width="0.7" height="0.8" fill="#5a1f1f"/><rect x="147.8" y="9.6" width="1.7" height="1.1" fill="#3d2222"/><rect x="43.7" y="35.8" width="1.0" height="1.5" fill="#6e3a36"/><rect x="50.8" y="10.3" width="1.5" height="1.7" fill="#5a1f1f"/><rect x="101.8" y="35.3" width="1.0" height="1.2" fill="#5a1f1f"/><rect x="153.7" y="35.7" width="1.0" height="1.2" fill="#4a1a1a"/><rect x="79.3" y="34.7" width="1.6" height="1.5" fill="#7a2626"/><rect x="132.1" y="28.9" width="1.1" height="1.1" fill="#6e3a36"/><rect x="58.1" y="29.3" width="0.9" height="1.5" fill="#5a1f1f"/><rect x="39.7" y="2.4" width="1.3" height="1.1" fill="#5a1f1f"/><rect x="157.4" y="33.0" width="1.0" height="0.8" fill="#140808"/><rect x="15.5" y="18.6" width="1.2" height="1.0" fill="#b03838"/><rect x="66.9" y="23.2" width="1.5" height="1.6" fill="#b03838"/><rect x="106.7" y="4.5" width="1.0" height="1.3" fill="#7c5c56"/><rect x="59.9" y="27.6" width="1.0" height="1.0" fill="#7a2626"/><rect x="24.6" y="33.1" width="1.1" height="1.1" fill="#2a1414"/><rect x="159.4" y="19.0" width="1.6" height="1.4" fill="#7a2626"/><rect x="159.1" y="3.8" width="1.6" height="1.6" fill="#4a1a1a"/><rect x="146.8" y="1.5" width="0.8" height="0.9" fill="#9a2c2c"/><rect x="156.3" y="21.8" width="1.1" height="1.7" fill="#140808"/><rect x="72.1" y="9.7" width="1.7" height="0.8" fill="#3d2222"/><rect x="95.7" y="23.2" width="1.1" height="0.9" fill="#7a2626"/><rect x="32.8" y="9.5" width="1.4" height="0.9" fill="#6e3a36"/><rect x="1.8" y="12.2" width="0.9" height="1.0" fill="#b03838"/><rect x="32.7" y="29.7" width="0.8" height="0.8" fill="#2a1414"/><rect x="63.5" y="20.6" width="0.8" height="0.9" fill="#6e3a36"/><rect x="111.7" y="15.3" width="1.0" height="1.7" fill="#9a2c2c"/><rect x="50.2" y="21.2" width="1.2" height="1.7" fill="#4a1a1a"/><rect x="160.1" y="13.6" width="1.5" height="0.9" fill="#7a2626"/><rect x="0.9" y="33.7" width="1.6" height="1.1" fill="#4a1a1a"/><rect x="141.8" y="17.2" width="0.7" height="1.3" fill="#7a2626"/><rect x="102.9" y="34.0" width="1.4" height="1.1" fill="#5a1f1f"/><rect x="81.0" y="5.5" width="1.3" height="1.7" fill="#9a2c2c"/><rect x="17.5" y="18.3" width="1.8" height="0.9" fill="#3d2222"/><rect x="20.3" y="35.3" width="1.2" height="0.8" fill="#140808"/><rect x="148.7" y="14.5" width="1.4" height="1.6" fill="#b09690"/><rect x="25.7" y="29.4" width="1.1" height="1.6" fill="#7a2626"/><rect x="133.2" y="6.8" width="1.1" height="1.3" fill="#7a2626"/><rect x="61.6" y="4.6" width="1.5" height="1.7" fill="#7a2626"/><rect x="6.6" y="21.0" width="0.7" height="1.6" fill="#3d2222"/><rect x="18.9" y="22.4" width="1.4" height="1.0" fill="#2a1414"/><rect x="67.5" y="21.8" width="1.4" height="1.2" fill="#4a1a1a"/><rect x="70.4" y="0.9" width="1.2" height="1.0" fill="#6e3a36"/><rect x="122.6" y="29.2" width="0.9" height="1.2" fill="#4a1a1a"/><rect x="17.2" y="4.8" width="0.8" height="1.2" fill="#4a1a1a"/><rect x="81.9" y="1.5" width="0.8" height="1.5" fill="#6e3a36"/><rect x="124.9" y="19.1" width="1.3" height="1.1" fill="#5a1f1f"/><rect x="152.7" y="5.1" width="1.8" height="1.5" fill="#7c5c56"/><rect x="130.9" y="7.2" width="1.2" height="1.8" fill="#140808"/><rect x="147.1" y="6.2" width="1.7" height="0.8" fill="#3d2222"/><rect x="56.4" y="28.3" width="1.7" height="1.0" fill="#7a2626"/><rect x="131.0" y="5.4" width="1.7" height="0.9" fill="#2a1414"/><rect x="42.2" y="18.9" width="0.7" height="0.9" fill="#9a2c2c"/><rect x="25.9" y="35.0" width="1.7" height="0.9" fill="#b03838"/><rect x="126.1" y="4.3" width="1.4" height="1.1" fill="#2a1414"/><rect x="140.2" y="20.8" width="1.7" height="0.8" fill="#2a1414"/><rect x="159.5" y="23.6" width="1.6" height="1.0" fill="#4a1a1a"/><rect x="159.1" y="21.6" width="1.5" height="1.2" fill="#4a1a1a"/><rect x="28.4" y="27.8" width="1.6" height="1.0" fill="#5a1f1f"/><rect x="102.7" y="36.8" width="1.4" height="1.0" fill="#2a1414"/><rect x="0.3" y="1.3" width="1.4" height="1.2" fill="#7a2626"/><rect x="82.3" y="33.5" width="0.9" height="1.4" fill="#7a2626"/><rect x="3.6" y="0.1" width="0.8" height="1.1" fill="#9a2c2c"/><rect x="36.0" y="21.8" width="0.9" height="1.4" fill="#6e3a36"/><rect x="76.3" y="5.0" width="1.0" height="0.9" fill="#140808"/><rect x="15.4" y="23.9" width="1.6" height="1.1" fill="#7c5c56"/><rect x="42.4" y="0.4" width="1.3" height="1.1" fill="#6e3a36"/><rect x="103.7" y="16.6" width="1.5" height="1.0" fill="#140808"/><rect x="145.1" y="1.6" width="1.1" height="1.0" fill="#2a1414"/><rect x="9.4" y="29.1" width="1.3" height="1.7" fill="#5a1f1f"/><rect x="22.8" y="7.5" width="1.3" height="1.4" fill="#6e3a36"/><rect x="130.6" y="6.5" width="1.0" height="0.8" fill="#9a2c2c"/><rect x="142.8" y="29.3" width="0.7" height="1.6" fill="#b03838"/><rect x="119.7" y="17.4" width="1.2" height="0.9" fill="#3d2222"/><rect x="16.9" y="8.7" width="1.1" height="1.5" fill="#5a1f1f"/><rect x="111.6" y="31.6" width="1.0" height="1.3" fill="#b03838"/><rect x="70.0" y="29.5" width="1.0" height="1.4" fill="#2a1414"/><rect x="155.0" y="8.1" width="0.7" height="1.0" fill="#7c5c56"/><rect x="37.9" y="27.8" width="1.5" height="1.1" fill="#140808"/><rect x="141.4" y="12.3" width="1.7" height="1.4" fill="#7a2626"/><rect x="111.3" y="24.9" width="1.2" height="1.6" fill="#140808"/><rect x="112.0" y="32.1" width="1.5" height="1.3" fill="#4a1a1a"/><rect x="49.4" y="7.9" width="0.8" height="1.7" fill="#6e3a36"/><rect x="23.2" y="1.0" width="1.7" height="1.1" fill="#5a1f1f"/><rect x="22.8" y="1.1" width="1.5" height="1.4" fill="#5a1f1f"/><rect x="111.9" y="27.6" width="1.3" height="1.1" fill="#5a1f1f"/><rect x="131.3" y="30.7" width="0.8" height="1.7" fill="#b09690"/><rect x="146.9" y="35.3" width="0.9" height="0.8" fill="#5a1f1f"/><rect x="5.5" y="31.7" width="1.4" height="1.6" fill="#3d2222"/><rect x="101.4" y="10.7" width="0.8" height="1.5" fill="#5a1f1f"/><rect x="32.9" y="11.9" width="0.7" height="1.0" fill="#4a1a1a"/><rect x="45.4" y="26.8" width="1.1" height="1.8" fill="#4a1a1a"/><rect x="80.9" y="31.8" width="0.7" height="1.2" fill="#6e3a36"/><rect x="70.1" y="28.9" width="1.5" height="1.3" fill="#9a2c2c"/><rect x="34.8" y="32.2" width="1.6" height="0.9" fill="#5a1f1f"/><rect x="0.2" y="7.6" width="1.8" height="0.7" fill="#3d2222"/><rect x="78.8" y="18.4" width="0.9" height="1.2" fill="#3d2222"/><rect x="55.8" y="31.1" width="1.7" height="1.0" fill="#9a2c2c"/><rect x="34.5" y="26.2" width="0.8" height="1.4" fill="#2a1414"/><rect x="13.0" y="29.5" width="1.6" height="1.4" fill="#b03838"/><rect x="57.1" y="15.0" width="1.7" height="0.8" fill="#4a1a1a"/><rect x="142.7" y="0.9" width="1.0" height="1.7" fill="#7a2626"/><rect x="80.5" y="14.2" width="1.0" height="1.2" fill="#7c5c56"/><rect x="85.4" y="28.2" width="1.4" height="1.1" fill="#3d2222"/><rect x="52.5" y="5.8" width="1.4" height="1.5" fill="#7c5c56"/><rect x="27.2" y="16.4" width="1.3" height="0.8" fill="#3d2222"/><rect x="74.2" y="33.1" width="0.9" height="1.0" fill="#7a2626"/><rect x="112.9" y="31.6" width="0.9" height="1.0" fill="#7a2626"/><rect x="52.4" y="19.5" width="1.1" height="0.9" fill="#7a2626"/><rect x="156.6" y="27.3" width="1.8" height="0.8" fill="#5a1f1f"/><rect x="61.7" y="36.8" width="1.5" height="1.2" fill="#3d2222"/><rect x="31.5" y="23.9" width="0.9" height="1.1" fill="#5a1f1f"/><rect x="5.4" y="14.9" width="1.5" height="1.3" fill="#3d2222"/><rect x="101.6" y="17.3" width="1.4" height="1.1" fill="#7a2626"/><rect x="119.0" y="34.0" width="1.3" height="1.5" fill="#4a1a1a"/><rect x="67.6" y="8.5" width="1.7" height="1.6" fill="#b03838"/><rect x="112.4" y="31.9" width="1.4" height="1.2" fill="#b03838"/><rect x="50.3" y="23.5" width="1.2" height="1.6" fill="#5a1f1f"/><rect x="114.5" y="23.5" width="1.2" height="1.2" fill="#7a2626"/><rect x="99.8" y="15.3" width="1.7" height="0.9" fill="#b03838"/><rect x="105.1" y="29.1" width="1.2" height="1.8" fill="#4a1a1a"/><rect x="6.1" y="20.3" width="1.6" height="1.7" fill="#7a2626"/><rect x="83.4" y="3.8" width="1.3" height="1.5" fill="#2a1414"/><rect x="82.3" y="23.9" width="1.3" height="1.2" fill="#3d2222"/><rect x="152.2" y="7.9" width="1.1" height="1.5" fill="#b03838"/><rect x="19.7" y="36.8" width="0.8" height="1.0" fill="#9a2c2c"/><rect x="64.2" y="0.5" width="1.2" height="1.5" fill="#4a1a1a"/><rect x="56.6" y="9.9" width="1.5" height="1.7" fill="#7a2626"/><rect x="84.6" y="8.2" width="1.1" height="0.9" fill="#3d2222"/><rect x="20.8" y="29.0" width="1.4" height="1.2" fill="#3d2222"/><rect x="90.3" y="8.5" width="1.1" height="1.4" fill="#140808"/><rect x="131.5" y="30.5" width="1.0" height="1.3" fill="#4a1a1a"/><rect x="20.1" y="31.2" width="1.6" height="1.0" fill="#9a2c2c"/><rect x="60.4" y="9.5" width="0.9" height="0.7" fill="#4a1a1a"/><rect x="115.9" y="10.5" width="1.0" height="1.2" fill="#7a2626"/><rect x="68.8" y="23.8" width="1.1" height="1.7" fill="#6e3a36"/><rect x="137.2" y="2.1" width="1.7" height="1.6" fill="#3d2222"/><rect x="22.5" y="31.1" width="0.7" height="0.7" fill="#6e3a36"/><rect x="152.9" y="24.5" width="0.8" height="0.9" fill="#7a2626"/><rect x="37.5" y="29.0" width="0.9" height="1.7" fill="#9a2c2c"/><rect x="127.1" y="6.3" width="1.4" height="1.6" fill="#b09690"/><rect x="107.4" y="33.4" width="1.6" height="0.9" fill="#3d2222"/><rect x="111.3" y="19.9" width="1.2" height="1.7" fill="#3d2222"/><rect x="89.1" y="9.9" width="0.9" height="1.2" fill="#7a2626"/><rect x="9.4" y="17.5" width="1.2" height="1.2" fill="#7a2626"/><rect x="86.7" y="32.3" width="1.6" height="1.2" fill="#5a1f1f"/><rect x="90.3" y="24.9" width="1.1" height="1.2" fill="#7c5c56"/><rect x="154.3" y="2.8" width="1.4" height="0.7" fill="#6e3a36"/><rect x="97.9" y="25.5" width="1.1" height="1.8" fill="#140808"/><rect x="82.0" y="18.1" width="0.7" height="1.5" fill="#b09690"/><rect x="100.4" y="12.7" width="1.1" height="1.2" fill="#7c5c56"/><rect x="84.4" y="28.8" width="1.2" height="1.2" fill="#7a2626"/><rect x="89.0" y="30.9" width="1.6" height="1.1" fill="#9a2c2c"/><rect x="80.9" y="10.2" width="1.8" height="1.4" fill="#2a1414"/><rect x="127.2" y="12.4" width="1.0" height="1.3" fill="#9a2c2c"/><rect x="102.0" y="29.3" width="1.5" height="1.7" fill="#5a1f1f"/><rect x="87.6" y="1.9" width="0.7" height="0.9" fill="#9a2c2c"/><rect x="148.0" y="22.8" width="1.6" height="1.7" fill="#6e3a36"/><rect x="98.2" y="23.1" width="1.5" height="1.4" fill="#6e3a36"/><rect x="109.4" y="7.9" width="1.2" height="1.5" fill="#6e3a36"/><rect x="16.3" y="6.8" width="1.6" height="1.7" fill="#5a1f1f"/><rect x="105.3" y="13.8" width="1.6" height="1.3" fill="#3d2222"/><rect x="41.4" y="11.3" width="1.1" height="1.2" fill="#4a1a1a"/><rect x="103.1" y="34.9" width="1.3" height="0.7" fill="#5a1f1f"/><rect x="19.1" y="30.3" width="1.7" height="1.2" fill="#2a1414"/><rect x="2.3" y="14.5" width="1.7" height="1.8" fill="#6e3a36"/><rect x="76.4" y="15.4" width="1.4" height="0.9" fill="#5a1f1f"/><rect x="24.4" y="0.6" width="1.5" height="0.8" fill="#5a1f1f"/><rect x="155.2" y="3.3" width="0.8" height="0.7" fill="#7c5c56"/><rect x="115.5" y="9.1" width="0.9" height="0.8" fill="#3d2222"/><rect x="124.3" y="26.7" width="1.5" height="0.8" fill="#7c5c56"/><rect x="101.0" y="26.5" width="1.7" height="1.0" fill="#4a1a1a"/><rect x="154.9" y="26.8" width="0.7" height="1.4" fill="#5a1f1f"/><rect x="131.3" y="3.0" width="1.5" height="0.9" fill="#9a2c2c"/><rect x="138.3" y="18.2" width="1.1" height="1.3" fill="#5a1f1f"/><rect x="70.5" y="25.3" width="1.6" height="1.1" fill="#7a2626"/><rect x="103.6" y="23.6" width="1.1" height="1.6" fill="#4a1a1a"/><rect x="151.8" y="29.3" width="1.0" height="0.8" fill="#2a1414"/><rect x="156.4" y="26.3" width="1.1" height="1.4" fill="#3d2222"/><rect x="157.0" y="31.1" width="1.0" height="1.2" fill="#6e3a36"/><rect x="142.6" y="14.1" width="1.4" height="1.7" fill="#b03838"/><rect x="129.7" y="10.6" width="1.0" height="1.2" fill="#5a1f1f"/><rect x="94.2" y="30.5" width="0.7" height="1.6" fill="#7c5c56"/><rect x="130.4" y="32.4" width="1.0" height="1.6" fill="#2a1414"/><rect x="129.6" y="25.6" width="1.1" height="0.8" fill="#b09690"/><rect x="88.9" y="29.8" width="1.5" height="1.7" fill="#7a2626"/><rect x="37.6" y="22.7" width="1.2" height="0.9" fill="#b03838"/><rect x="40.9" y="28.1" width="1.2" height="0.8" fill="#3d2222"/><rect x="129.5" y="28.9" width="1.3" height="1.7" fill="#7a2626"/><rect x="142.1" y="19.5" width="1.3" height="0.9" fill="#4a1a1a"/><rect x="30.9" y="6.8" width="1.1" height="1.3" fill="#b03838"/><rect x="64.6" y="19.3" width="0.7" height="1.8" fill="#7a2626"/><rect x="60.1" y="4.0" width="1.6" height="0.9" fill="#6e3a36"/><rect x="95.9" y="12.9" width="0.7" height="0.7" fill="#2a1414"/><rect x="159.1" y="32.4" width="1.3" height="1.0" fill="#2a1414"/><rect x="125.1" y="15.9" width="1.5" height="1.6" fill="#140808"/><rect x="154.7" y="9.5" width="0.9" height="0.9" fill="#5a1f1f"/><rect x="13.4" y="1.9" width="1.7" height="1.2" fill="#2a1414"/><rect x="152.1" y="34.0" width="1.4" height="1.1" fill="#5a1f1f"/><rect x="19.3" y="35.9" width="1.3" height="1.4" fill="#7a2626"/><rect x="153.6" y="25.0" width="1.2" height="0.9" fill="#4a1a1a"/><rect x="155.1" y="37.1" width="0.7" height="1.0" fill="#7a2626"/><rect x="56.5" y="33.8" width="1.6" height="0.8" fill="#b09690"/><rect x="126.3" y="26.5" width="1.8" height="0.8" fill="#6e3a36"/><rect x="23.3" y="28.2" width="1.4" height="1.0" fill="#140808"/><rect x="95.0" y="28.3" width="1.1" height="1.0" fill="#5a1f1f"/><rect x="19.9" y="18.0" width="1.0" height="0.9" fill="#7a2626"/><rect x="108.8" y="0.5" width="0.9" height="0.7" fill="#b03838"/><rect x="149.0" y="8.2" width="1.7" height="1.7" fill="#140808"/><rect x="22.4" y="16.7" width="1.7" height="1.6" fill="#5a1f1f"/><rect x="100.9" y="16.9" width="1.6" height="1.2" fill="#9a2c2c"/><rect x="100.9" y="5.3" width="0.8" height="1.5" fill="#7a2626"/><rect x="88.9" y="5.4" width="1.0" height="1.2" fill="#7c5c56"/><rect x="25.0" y="10.1" width="1.1" height="0.9" fill="#7c5c56"/><rect x="78.9" y="11.9" width="0.8" height="1.8" fill="#b09690"/><rect x="9.1" y="33.5" width="0.9" height="1.2" fill="#6e3a36"/><rect x="46.0" y="9.6" width="1.1" height="1.8" fill="#7a2626"/><rect x="160.3" y="34.6" width="1.0" height="1.7" fill="#5a1f1f"/><rect x="9.2" y="27.2" width="1.8" height="0.7" fill="#9a2c2c"/><rect x="129.6" y="12.7" width="0.7" height="1.6" fill="#7a2626"/><rect x="84.6" y="6.9" width="1.7" height="0.9" fill="#4a1a1a"/><rect x="91.8" y="5.2" width="1.5" height="1.5" fill="#7a2626"/><rect x="31.6" y="3.0" width="1.4" height="1.2" fill="#5a1f1f"/><rect x="44.0" y="7.7" width="1.5" height="1.6" fill="#6e3a36"/><rect x="93.6" y="7.6" width="1.5" height="1.1" fill="#5a1f1f"/><rect x="115.9" y="2.1" width="1.1" height="1.6" fill="#3d2222"/><rect x="138.8" y="18.4" width="1.7" height="1.2" fill="#5a1f1f"/><rect x="140.0" y="10.0" width="1.6" height="1.1" fill="#7a2626"/><rect x="26.3" y="13.9" width="0.7" height="1.3" fill="#6e3a36"/><rect x="71.6" y="19.3" width="1.5" height="1.6" fill="#5a1f1f"/><rect x="139.0" y="12.0" width="1.1" height="1.5" fill="#b03838"/><rect x="9.8" y="32.6" width="1.2" height="1.3" fill="#140808"/><rect x="85.2" y="20.1" width="1.8" height="0.9" fill="#5a1f1f"/><rect x="29.3" y="3.8" width="1.6" height="0.7" fill="#7a2626"/><rect x="15.5" y="26.1" width="0.7" height="1.4" fill="#7a2626"/><rect x="92.6" y="19.6" width="0.8" height="1.7" fill="#b03838"/><rect x="115.2" y="1.7" width="1.2" height="1.3" fill="#5a1f1f"/><rect x="44.9" y="4.6" width="0.9" height="1.4" fill="#4a1a1a"/><rect x="138.3" y="5.5" width="1.5" height="0.9" fill="#2a1414"/><rect x="132.7" y="35.1" width="1.2" height="1.6" fill="#4a1a1a"/><rect x="84.4" y="14.8" width="1.6" height="1.1" fill="#140808"/><rect x="38.6" y="12.5" width="1.8" height="1.6" fill="#4a1a1a"/><rect x="146.6" y="30.5" width="0.8" height="1.3" fill="#7c5c56"/><rect x="153.8" y="34.9" width="1.2" height="1.4" fill="#7a2626"/><rect x="58.5" y="19.9" width="1.2" height="1.3" fill="#5a1f1f"/><rect x="3.3" y="5.2" width="1.6" height="1.7" fill="#140808"/><rect x="101.7" y="30.3" width="1.7" height="0.7" fill="#7c5c56"/><rect x="103.0" y="9.9" width="1.0" height="1.3" fill="#b03838"/><rect x="148.5" y="23.2" width="1.3" height="1.2" fill="#7a2626"/><rect x="152.7" y="10.8" width="1.4" height="0.8" fill="#9a2c2c"/><rect x="95.4" y="35.8" width="1.0" height="1.2" fill="#2a1414"/><rect x="85.7" y="5.6" width="0.8" height="1.0" fill="#7a2626"/><rect x="65.3" y="10.8" width="0.8" height="1.3" fill="#7a2626"/><rect x="134.9" y="22.8" width="1.4" height="0.9" fill="#2a1414"/><rect x="114.1" y="17.2" width="1.4" height="1.2" fill="#2a1414"/><rect x="49.9" y="9.1" width="1.3" height="1.1" fill="#7a2626"/><rect x="94.1" y="0.4" width="1.6" height="1.0" fill="#9a2c2c"/><rect x="89.4" y="18.4" width="1.8" height="1.0" fill="#9a2c2c"/><rect x="124.0" y="5.9" width="1.7" height="1.2" fill="#5a1f1f"/><rect x="10.0" y="14.5" width="1.5" height="0.8" fill="#4a1a1a"/><rect x="36.2" y="35.9" width="0.9" height="1.1" fill="#3d2222"/><rect x="56.6" y="25.3" width="1.6" height="1.6" fill="#6e3a36"/><rect x="83.2" y="27.6" width="1.5" height="1.2" fill="#3d2222"/><rect x="126.1" y="26.5" width="0.8" height="1.7" fill="#b09690"/><rect x="0.7" y="28.6" width="1.2" height="1.8" fill="#2a1414"/><rect x="91.9" y="15.6" width="1.7" height="1.4" fill="#3d2222"/><rect x="61.0" y="16.9" width="1.5" height="1.0" fill="#4a1a1a"/><rect x="62.7" y="20.8" width="1.1" height="1.6" fill="#4a1a1a"/><rect x="136.4" y="18.7" width="0.9" height="1.0" fill="#4a1a1a"/><rect x="23.3" y="21.5" width="0.8" height="1.7" fill="#2a1414"/><rect x="52.0" y="31.5" width="1.8" height="0.9" fill="#7c5c56"/><rect x="68.5" y="34.1" width="0.8" height="1.3" fill="#5a1f1f"/><rect x="79.9" y="34.4" width="1.3" height="1.8" fill="#3d2222"/><rect x="83.1" y="19.3" width="1.1" height="1.1" fill="#b03838"/><rect x="95.5" y="13.1" width="1.4" height="1.3" fill="#140808"/><rect x="15.9" y="14.0" width="1.3" height="1.3" fill="#4a1a1a"/><rect x="141.3" y="36.1" width="1.2" height="1.4" fill="#2a1414"/><rect x="160.0" y="12.8" width="1.6" height="0.9" fill="#2a1414"/><rect x="51.1" y="36.6" width="1.3" height="0.8" fill="#3d2222"/><rect x="143.7" y="25.8" width="1.8" height="1.7" fill="#3d2222"/><rect x="67.6" y="5.8" width="1.3" height="1.3" fill="#9a2c2c"/><rect x="30.2" y="6.8" width="1.4" height="1.1" fill="#6e3a36"/><rect x="159.6" y="23.8" width="1.2" height="1.6" fill="#5a1f1f"/><rect x="49.3" y="25.8" width="1.0" height="1.6" fill="#5a1f1f"/><rect x="94.1" y="25.0" width="1.2" height="1.3" fill="#7a2626"/><rect x="42.7" y="24.2" width="1.8" height="1.3" fill="#2a1414"/><rect x="66.0" y="4.5" width="1.5" height="0.8" fill="#7a2626"/><rect x="16.1" y="6.4" width="1.6" height="1.4" fill="#2a1414"/><rect x="129.5" y="2.3" width="1.5" height="1.1" fill="#5a1f1f"/><rect x="114.9" y="13.2" width="1.0" height="0.8" fill="#7a2626"/><rect x="145.2" y="21.8" width="1.2" height="1.1" fill="#9a2c2c"/><rect x="8.8" y="33.3" width="1.8" height="1.2" fill="#2a1414"/><rect x="99.6" y="9.3" width="1.7" height="1.6" fill="#5a1f1f"/><rect x="50.6" y="33.6" width="1.0" height="1.4" fill="#3d2222"/><rect x="154.2" y="18.5" width="1.0" height="1.1" fill="#140808"/><rect x="115.4" y="8.3" width="1.7" height="1.2" fill="#9a2c2c"/><rect x="127.3" y="9.1" width="1.1" height="0.9" fill="#7a2626"/><rect x="156.0" y="10.9" width="0.8" height="1.3" fill="#2a1414"/><rect x="61.9" y="15.1" width="0.8" height="1.6" fill="#5a1f1f"/><rect x="56.4" y="9.2" width="1.0" height="1.0" fill="#7a2626"/><rect x="5.6" y="24.8" width="0.9" height="1.5" fill="#9a2c2c"/><rect x="14.9" y="10.1" width="0.8" height="1.2" fill="#3d2222"/><rect x="134.3" y="30.1" width="1.1" height="1.5" fill="#7a2626"/><rect x="60.5" y="35.8" width="1.7" height="1.3" fill="#7a2626"/><rect x="36.5" y="16.9" width="1.5" height="1.0" fill="#7a2626"/><rect x="144.5" y="22.0" width="1.0" height="1.4" fill="#4a1a1a"/><rect x="34.1" y="32.6" width="1.3" height="1.3" fill="#5a1f1f"/><rect x="43.4" y="28.9" width="1.4" height="1.3" fill="#4a1a1a"/><rect x="49.9" y="14.6" width="0.9" height="1.6" fill="#5a1f1f"/><rect x="51.6" y="24.8" width="1.3" height="1.1" fill="#5a1f1f"/><rect x="80.4" y="11.1" width="1.0" height="0.9" fill="#5a1f1f"/><rect x="20.3" y="26.8" width="1.1" height="1.7" fill="#9a2c2c"/><rect x="124.5" y="33.0" width="0.8" height="1.0" fill="#7c5c56"/><rect x="4.7" y="25.4" width="1.1" height="1.2" fill="#6e3a36"/><rect x="105.8" y="26.2" width="1.6" height="1.1" fill="#7a2626"/><rect x="101.0" y="6.8" width="1.7" height="1.5" fill="#5a1f1f"/><rect x="114.4" y="1.5" width="0.9" height="0.9" fill="#5a1f1f"/><rect x="48.7" y="14.2" width="1.0" height="1.4" fill="#5a1f1f"/><rect x="28.9" y="31.4" width="1.5" height="1.0" fill="#2a1414"/><rect x="69.9" y="25.6" width="0.7" height="1.6" fill="#9a2c2c"/><rect x="124.7" y="10.7" width="1.6" height="1.4" fill="#5a1f1f"/><rect x="7.6" y="9.1" width="1.6" height="0.9" fill="#5a1f1f"/><rect x="146.9" y="28.0" width="1.5" height="1.1" fill="#5a1f1f"/><rect x="120.1" y="31.0" width="0.8" height="1.7" fill="#9a2c2c"/><rect x="68.1" y="34.8" width="1.5" height="1.6" fill="#b03838"/><rect x="100.9" y="16.9" width="1.5" height="1.2" fill="#5a1f1f"/><rect x="82.2" y="34.7" width="1.5" height="0.7" fill="#7a2626"/><rect x="112.9" y="30.1" width="1.3" height="1.8" fill="#9a2c2c"/><rect x="102.4" y="20.3" width="0.8" height="1.1" fill="#7a2626"/><rect x="66.1" y="7.5" width="0.9" height="1.5" fill="#9a2c2c"/><rect x="107.7" y="8.9" width="1.3" height="1.2" fill="#7a2626"/><rect x="150.3" y="13.1" width="1.7" height="0.9" fill="#9a2c2c"/><rect x="90.5" y="12.5" width="1.3" height="1.5" fill="#3d2222"/><rect x="27.2" y="24.9" width="1.2" height="1.5" fill="#6e3a36"/><rect x="133.5" y="4.3" width="1.1" height="0.9" fill="#9a2c2c"/><rect x="9.7" y="10.5" width="1.5" height="1.2" fill="#7a2626"/><rect x="18.1" y="12.1" width="1.1" height="0.9" fill="#4a1a1a"/><rect x="11.5" y="0.4" width="1.5" height="0.8" fill="#140808"/><rect x="115.2" y="36.7" width="0.8" height="1.2" fill="#2a1414"/><rect x="69.7" y="7.1" width="0.7" height="1.7" fill="#2a1414"/><rect x="103.5" y="23.5" width="1.4" height="1.0" fill="#140808"/><rect x="39.5" y="5.2" width="1.6" height="1.6" fill="#5a1f1f"/><rect x="47.6" y="6.9" width="1.6" height="1.7" fill="#6e3a36"/><rect x="27.1" y="29.3" width="1.5" height="1.1" fill="#3d2222"/><rect x="29.6" y="30.9" width="1.1" height="1.3" fill="#9a2c2c"/><rect x="59.3" y="31.1" width="0.7" height="1.3" fill="#7a2626"/><rect x="100.9" y="30.7" width="1.7" height="1.7" fill="#b03838"/><rect x="79.4" y="18.7" width="1.0" height="1.3" fill="#7a2626"/><rect x="12.9" y="25.7" width="1.2" height="1.8" fill="#7a2626"/><rect x="14.4" y="1.5" width="0.9" height="1.5" fill="#4a1a1a"/><rect x="0.5" y="31.4" width="1.6" height="1.2" fill="#7c5c56"/><rect x="45.5" y="24.7" width="1.2" height="1.1" fill="#2a1414"/><rect x="70.5" y="24.9" width="1.7" height="0.9" fill="#3d2222"/><rect x="47.5" y="16.6" width="1.1" height="0.9" fill="#2a1414"/><rect x="13.7" y="12.1" width="1.8" height="1.7" fill="#4a1a1a"/><rect x="139.0" y="36.4" width="1.4" height="1.6" fill="#140808"/><rect x="9.6" y="25.3" width="1.0" height="1.3" fill="#6e3a36"/><rect x="153.0" y="18.0" width="1.0" height="1.1" fill="#6e3a36"/><rect x="142.1" y="1.0" width="1.4" height="1.2" fill="#7a2626"/><rect x="13.7" y="24.7" width="1.3" height="1.2" fill="#4a1a1a"/><rect x="85.1" y="21.1" width="0.8" height="0.9" fill="#4a1a1a"/><rect x="142.9" y="20.5" width="1.6" height="1.0" fill="#5a1f1f"/><rect x="15.3" y="19.9" width="1.2" height="1.3" fill="#7a2626"/><rect x="36.4" y="21.4" width="1.3" height="1.3" fill="#5a1f1f"/><rect x="12.9" y="15.3" width="1.2" height="1.6" fill="#5a1f1f"/><rect x="88.4" y="26.7" width="0.8" height="1.8" fill="#3d2222"/><rect x="115.9" y="3.8" width="1.1" height="0.9" fill="#3d2222"/><rect x="154.2" y="21.1" width="0.9" height="1.6" fill="#3d2222"/><rect x="9.2" y="8.9" width="0.7" height="1.4" fill="#4a1a1a"/><rect x="34.2" y="11.2" width="1.2" height="1.7" fill="#b03838"/><rect x="99.8" y="32.6" width="1.7" height="1.7" fill="#2a1414"/><rect x="27.0" y="27.9" width="1.5" height="1.4" fill="#9a2c2c"/><rect x="132.6" y="4.6" width="1.5" height="1.7" fill="#4a1a1a"/><rect x="115.9" y="1.6" width="0.8" height="1.3" fill="#6e3a36"/><rect x="129.0" y="4.2" width="1.4" height="1.0" fill="#140808"/><rect x="31.0" y="16.7" width="1.3" height="0.8" fill="#7c5c56"/><rect x="3.4" y="4.1" width="0.9" height="1.3" fill="#3d2222"/><rect x="46.6" y="25.7" width="0.9" height="1.7" fill="#4a1a1a"/><rect x="86.5" y="25.8" width="1.7" height="0.7" fill="#3d2222"/><rect x="55.0" y="5.6" width="1.7" height="1.6" fill="#2a1414"/><rect x="5.7" y="6.8" width="1.4" height="1.1" fill="#3d2222"/><rect x="76.4" y="5.9" width="1.1" height="1.7" fill="#7c5c56"/><rect x="98.1" y="2.8" width="0.9" height="1.7" fill="#9a2c2c"/><rect x="94.6" y="1.6" width="1.1" height="1.2" fill="#7a2626"/><rect x="92.7" y="14.5" width="0.7" height="1.3" fill="#9a2c2c"/><rect x="53.6" y="0.8" width="1.8" height="0.7" fill="#4a1a1a"/><rect x="23.4" y="25.1" width="1.0" height="1.3" fill="#9a2c2c"/><rect x="42.1" y="21.3" width="1.8" height="1.8" fill="#2a1414"/><rect x="5.5" y="21.0" width="1.7" height="1.6" fill="#3d2222"/><rect x="101.7" y="23.7" width="1.0" height="1.6" fill="#4a1a1a"/><rect x="140.2" y="35.1" width="1.0" height="1.5" fill="#b03838"/><rect x="118.8" y="19.0" width="1.1" height="1.3" fill="#6e3a36"/><rect x="65.2" y="2.3" width="1.1" height="1.8" fill="#9a2c2c"/><rect x="77.3" y="13.7" width="1.0" height="1.1" fill="#7a2626"/><rect x="21.8" y="0.3" width="1.2" height="1.2" fill="#7c5c56"/><rect x="91.3" y="11.3" width="0.8" height="1.0" fill="#7a2626"/><rect x="49.5" y="27.2" width="1.7" height="1.1" fill="#2a1414"/><rect x="147.9" y="21.8" width="0.9" height="1.3" fill="#5a1f1f"/><rect x="158.6" y="13.4" width="1.2" height="1.7" fill="#3d2222"/><rect x="10.9" y="18.1" width="1.0" height="1.0" fill="#b09690"/><rect x="3.7" y="6.2" width="1.5" height="0.9" fill="#9a2c2c"/><rect x="64.2" y="7.5" width="1.7" height="1.4" fill="#6e3a36"/><rect x="31.6" y="27.4" width="1.4" height="0.8" fill="#140808"/><rect x="130.0" y="32.7" width="0.9" height="0.9" fill="#9a2c2c"/><rect x="86.2" y="32.7" width="1.7" height="0.9" fill="#6e3a36"/><rect x="52.5" y="28.0" width="1.1" height="1.4" fill="#6e3a36"/><rect x="54.2" y="2.1" width="0.8" height="1.4" fill="#4a1a1a"/><rect x="53.7" y="18.5" width="1.0" height="1.2" fill="#6e3a36"/><rect x="2.2" y="34.6" width="1.8" height="0.8" fill="#2a1414"/><rect x="98.6" y="27.1" width="0.8" height="0.9" fill="#9a2c2c"/><rect x="22.9" y="28.7" width="1.6" height="1.2" fill="#5a1f1f"/><rect x="86.5" y="22.0" width="1.4" height="1.4" fill="#2a1414"/><rect x="53.1" y="27.7" width="1.5" height="1.5" fill="#7a2626"/><rect x="124.6" y="11.6" width="1.8" height="1.2" fill="#3d2222"/><rect x="44.7" y="19.6" width="0.8" height="0.7" fill="#140808"/><rect x="76.4" y="24.5" width="1.1" height="1.8" fill="#3d2222"/><rect x="36.6" y="28.3" width="0.7" height="0.8" fill="#5a1f1f"/><rect x="9.7" y="18.8" width="0.9" height="1.7" fill="#2a1414"/><rect x="58.7" y="5.6" width="1.5" height="1.7" fill="#7a2626"/><rect x="26.0" y="1.1" width="1.0" height="1.8" fill="#3d2222"/><rect x="80.1" y="23.8" width="1.6" height="1.2" fill="#9a2c2c"/><rect x="52.0" y="33.8" width="1.5" height="0.8" fill="#5a1f1f"/><rect x="103.7" y="15.0" width="0.8" height="1.3" fill="#7c5c56"/><rect x="65.8" y="34.4" width="1.4" height="0.9" fill="#140808"/><rect x="40.5" y="9.8" width="1.0" height="0.9" fill="#4a1a1a"/><rect x="121.9" y="24.0" width="1.8" height="0.9" fill="#9a2c2c"/><rect x="91.5" y="5.9" width="1.7" height="1.0" fill="#7c5c56"/><rect x="120.7" y="30.8" width="1.1" height="1.2" fill="#9a2c2c"/><rect x="143.1" y="6.0" width="1.4" height="1.2" fill="#b03838"/><rect x="93.0" y="33.0" width="1.7" height="1.1" fill="#7a2626"/><rect x="125.2" y="32.3" width="1.7" height="1.8" fill="#7a2626"/><rect x="47.8" y="0.9" width="1.8" height="0.7" fill="#5a1f1f"/><rect x="146.4" y="5.6" width="0.8" height="0.9" fill="#3d2222"/><rect x="109.7" y="3.4" width="1.7" height="1.5" fill="#9a2c2c"/><rect x="141.6" y="36.6" width="1.0" height="1.6" fill="#5a1f1f"/><rect x="110.7" y="1.4" width="1.0" height="1.2" fill="#2a1414"/><rect x="16.8" y="0.7" width="1.0" height="1.7" fill="#140808"/><rect x="19.3" y="18.2" width="1.2" height="0.9" fill="#7a2626"/><rect x="110.1" y="5.5" width="1.3" height="0.8" fill="#3d2222"/><rect x="56.8" y="18.6" width="1.1" height="0.9" fill="#140808"/><rect x="155.4" y="33.0" width="1.0" height="0.9" fill="#3d2222"/><rect x="42.5" y="2.6" width="1.3" height="1.1" fill="#5a1f1f"/><rect x="89.4" y="13.6" width="1.5" height="1.4" fill="#5a1f1f"/><rect x="87.4" y="20.5" width="1.8" height="1.7" fill="#b03838"/><rect x="115.3" y="14.9" width="1.2" height="1.8" fill="#9a2c2c"/><rect x="62.2" y="14.4" width="0.9" height="1.8" fill="#4a1a1a"/><rect x="0.8" y="22.7" width="1.0" height="1.4" fill="#140808"/><rect x="60.5" y="9.0" width="0.8" height="1.6" fill="#7a2626"/><rect x="125.9" y="34.0" width="1.5" height="1.1" fill="#5a1f1f"/><rect x="103.8" y="20.5" width="1.8" height="0.7" fill="#9a2c2c"/><rect x="119.8" y="31.9" width="1.4" height="1.8" fill="#2a1414"/><rect x="37.7" y="23.5" width="1.1" height="1.5" fill="#3d2222"/><rect x="63.2" y="19.7" width="1.4" height="1.1" fill="#6e3a36"/><rect x="101.0" y="20.3" width="1.4" height="1.0" fill="#7a2626"/><rect x="145.9" y="17.7" width="1.3" height="1.2" fill="#b03838"/><rect x="35.5" y="5.3" width="1.3" height="1.3" fill="#140808"/><rect x="84.7" y="30.4" width="0.9" height="1.6" fill="#7a2626"/><rect x="73.9" y="24.0" width="1.7" height="1.7" fill="#3d2222"/><rect x="6.9" y="14.3" width="1.6" height="0.8" fill="#3d2222"/><rect x="24.7" y="9.4" width="1.1" height="1.6" fill="#5a1f1f"/><rect x="83.7" y="16.9" width="1.1" height="1.8" fill="#5a1f1f"/><rect x="111.6" y="16.8" width="1.6" height="1.5" fill="#4a1a1a"/><rect x="24.1" y="25.4" width="1.3" height="1.0" fill="#4a1a1a"/><rect x="59.5" y="12.7" width="0.7" height="0.9" fill="#4a1a1a"/><rect x="91.6" y="2.2" width="1.5" height="1.0" fill="#7a2626"/><rect x="52.0" y="9.0" width="0.8" height="1.4" fill="#3d2222"/><rect x="137.9" y="7.5" width="1.6" height="1.4" fill="#4a1a1a"/><rect x="59.7" y="1.6" width="1.1" height="1.5" fill="#4a1a1a"/><rect x="47.4" y="15.3" width="1.6" height="1.1" fill="#6e3a36"/><rect x="61.9" y="21.6" width="0.9" height="1.8" fill="#140808"/><rect x="114.3" y="13.9" width="1.1" height="0.8" fill="#6e3a36"/><rect x="121.4" y="14.2" width="1.2" height="1.7" fill="#2a1414"/><rect x="121.6" y="1.0" width="1.2" height="1.2" fill="#6e3a36"/><rect x="134.8" y="15.5" width="1.7" height="1.2" fill="#4a1a1a"/><rect x="78.9" y="19.1" width="1.4" height="1.5" fill="#3d2222"/><rect x="64.5" y="1.5" width="1.3" height="1.5" fill="#b03838"/><rect x="123.6" y="4.4" width="0.8" height="1.6" fill="#7a2626"/><rect x="16.3" y="3.3" width="1.3" height="0.8" fill="#3d2222"/><rect x="109.4" y="26.6" width="0.8" height="1.5" fill="#2a1414"/><rect x="67.1" y="21.8" width="1.6" height="1.7" fill="#140808"/><rect x="23.4" y="12.5" width="0.7" height="1.8" fill="#2a1414"/><rect x="44.1" y="9.8" width="1.0" height="1.6" fill="#9a2c2c"/><rect x="89.2" y="19.1" width="0.8" height="1.0" fill="#4a1a1a"/><rect x="139.2" y="30.0" width="1.0" height="0.9" fill="#7c5c56"/><rect x="8.4" y="20.1" width="1.2" height="1.2" fill="#4a1a1a"/><rect x="93.8" y="13.7" width="0.9" height="1.7" fill="#3d2222"/><rect x="89.3" y="1.9" width="1.3" height="1.1" fill="#9a2c2c"/><rect x="90.7" y="12.1" width="1.6" height="1.0" fill="#9a2c2c"/><rect x="114.1" y="30.0" width="1.2" height="1.7" fill="#6e3a36"/><rect x="71.4" y="32.8" width="1.2" height="1.4" fill="#5a1f1f"/><rect x="7.9" y="32.3" width="1.4" height="0.9" fill="#5a1f1f"/><rect x="148.1" y="21.0" width="1.2" height="1.4" fill="#3d2222"/><rect x="108.4" y="11.0" width="1.6" height="0.9" fill="#7a2626"/><rect x="147.4" y="7.7" width="0.8" height="1.6" fill="#5a1f1f"/><rect x="152.7" y="15.5" width="1.0" height="1.7" fill="#6e3a36"/><rect x="110.2" y="5.8" width="1.5" height="0.7" fill="#5a1f1f"/><rect x="134.3" y="11.0" width="1.3" height="1.1" fill="#7a2626"/><rect x="90.0" y="5.8" width="1.1" height="1.6" fill="#b09690"/><rect x="24.4" y="29.9" width="1.1" height="0.7" fill="#140808"/><rect x="61.0" y="24.0" width="1.3" height="0.8" fill="#7a2626"/><rect x="74.6" y="27.2" width="1.4" height="0.8" fill="#4a1a1a"/><rect x="133.1" y="4.6" width="1.8" height="1.7" fill="#140808"/><rect x="84.5" y="10.9" width="1.5" height="1.2" fill="#9a2c2c"/><rect x="149.3" y="3.5" width="1.7" height="1.4" fill="#2a1414"/><rect x="86.8" y="3.3" width="1.0" height="1.7" fill="#7a2626"/><rect x="135.8" y="8.5" width="0.7" height="1.4" fill="#140808"/><rect x="155.4" y="12.9" width="1.4" height="0.8" fill="#140808"/><rect x="53.5" y="16.8" width="1.5" height="0.9" fill="#7a2626"/><rect x="126.5" y="11.2" width="1.3" height="0.8" fill="#5a1f1f"/><rect x="88.6" y="29.5" width="1.2" height="0.7" fill="#6e3a36"/><rect x="82.4" y="3.6" width="0.8" height="1.3" fill="#6e3a36"/><rect x="56.7" y="14.0" width="0.9" height="0.9" fill="#6e3a36"/><rect x="151.2" y="12.4" width="1.7" height="1.2" fill="#7c5c56"/><rect x="23.9" y="3.5" width="0.8" height="1.2" fill="#7c5c56"/><rect x="86.1" y="4.4" width="0.9" height="1.3" fill="#4a1a1a"/><rect x="81.4" y="13.7" width="1.1" height="0.9" fill="#7a2626"/><rect x="20.4" y="9.0" width="1.3" height="1.7" fill="#7c5c56"/><rect x="2.4" y="35.3" width="1.6" height="1.3" fill="#2a1414"/><rect x="110.6" y="8.6" width="0.9" height="1.0" fill="#3d2222"/><rect x="5.0" y="14.7" width="1.0" height="1.7" fill="#2a1414"/><rect x="13.5" y="21.6" width="1.4" height="1.6" fill="#7a2626"/><rect x="114.2" y="2.3" width="1.4" height="1.8" fill="#7a2626"/><rect x="6.6" y="23.1" width="1.6" height="1.1" fill="#b03838"/><rect x="130.2" y="17.3" width="0.7" height="1.7" fill="#140808"/><rect x="66.2" y="15.2" width="1.0" height="1.5" fill="#5a1f1f"/><rect x="109.0" y="5.7" width="0.9" height="0.9" fill="#9a2c2c"/><rect x="35.3" y="12.4" width="1.8" height="1.6" fill="#140808"/><rect x="77.0" y="18.6" width="1.7" height="1.5" fill="#3d2222"/><rect x="102.2" y="7.4" width="1.6" height="1.6" fill="#6e3a36"/><rect x="14.8" y="26.8" width="0.9" height="1.8" fill="#9a2c2c"/><rect x="108.0" y="27.9" width="1.6" height="1.7" fill="#7a2626"/><rect x="145.3" y="27.9" width="1.6" height="1.3" fill="#3d2222"/><rect x="69.9" y="30.9" width="1.7" height="1.0" fill="#3d2222"/><rect x="154.3" y="19.9" width="0.8" height="1.8" fill="#140808"/><rect x="126.5" y="9.4" width="1.0" height="0.9" fill="#7c5c56"/><rect x="73.5" y="8.9" width="1.7" height="1.5" fill="#2a1414"/><rect x="114.1" y="14.7" width="1.6" height="1.5" fill="#3d2222"/><rect x="151.2" y="30.9" width="0.8" height="1.4" fill="#4a1a1a"/><rect x="134.3" y="12.7" width="1.6" height="1.6" fill="#6e3a36"/><rect x="0.7" y="18.3" width="0.8" height="1.6" fill="#5a1f1f"/><rect x="67.2" y="22.6" width="1.1" height="0.9" fill="#4a1a1a"/><rect x="56.8" y="31.6" width="1.0" height="0.8" fill="#6e3a36"/><rect x="43.5" y="26.2" width="1.4" height="1.6" fill="#4a1a1a"/><rect x="19.4" y="25.5" width="1.6" height="0.9" fill="#5a1f1f"/><rect x="43.6" y="35.8" width="0.9" height="1.7" fill="#4a1a1a"/><rect x="98.0" y="33.4" width="1.2" height="1.8" fill="#4a1a1a"/><rect x="81.4" y="37.0" width="1.6" height="0.9" fill="#7a2626"/><rect x="84.7" y="0.0" width="1.7" height="1.2" fill="#7a2626"/><rect x="130.0" y="9.4" width="0.8" height="1.3" fill="#9a2c2c"/><rect x="138.5" y="19.2" width="1.7" height="1.7" fill="#4a1a1a"/><rect x="107.0" y="2.8" width="1.2" height="1.8" fill="#6e3a36"/><rect x="58.1" y="24.7" width="1.1" height="1.3" fill="#6e3a36"/><rect x="108.7" y="33.9" width="1.1" height="1.8" fill="#2a1414"/><rect x="9.2" y="31.2" width="1.3" height="1.2" fill="#b03838"/><rect x="120.6" y="33.3" width="1.5" height="0.7" fill="#3d2222"/><rect x="52.2" y="5.1" width="1.7" height="0.9" fill="#140808"/><rect x="94.4" y="21.6" width="1.1" height="1.5" fill="#5a1f1f"/><rect x="103.0" y="10.5" width="1.0" height="1.3" fill="#3d2222"/><rect x="67.6" y="36.6" width="1.6" height="1.4" fill="#6e3a36"/><rect x="61.1" y="36.0" width="1.5" height="1.0" fill="#b03838"/><rect x="26.0" y="21.5" width="1.6" height="1.1" fill="#3d2222"/><rect x="22.5" y="19.3" width="0.9" height="1.5" fill="#7c5c56"/><rect x="27.4" y="11.7" width="1.0" height="1.1" fill="#5a1f1f"/><rect x="155.3" y="36.0" width="1.0" height="1.7" fill="#7a2626"/><rect x="31.7" y="12.0" width="0.8" height="1.0" fill="#4a1a1a"/><rect x="63.3" y="14.4" width="1.0" height="0.9" fill="#140808"/><rect x="145.9" y="16.8" width="1.4" height="1.6" fill="#7c5c56"/><rect x="50.5" y="5.7" width="1.2" height="1.3" fill="#3d2222"/><rect x="107.7" y="28.1" width="1.1" height="1.7" fill="#9a2c2c"/><rect x="85.0" y="10.8" width="1.0" height="1.5" fill="#6e3a36"/><rect x="6.6" y="30.9" width="1.1" height="1.7" fill="#2a1414"/><rect x="42.6" y="9.1" width="1.3" height="1.5" fill="#5a1f1f"/><rect x="108.9" y="15.4" width="0.8" height="1.0" fill="#3d2222"/><rect x="103.6" y="36.2" width="1.5" height="1.6" fill="#6e3a36"/><rect x="63.4" y="35.2" width="1.1" height="1.1" fill="#3d2222"/><rect x="129.4" y="13.1" width="1.7" height="1.3" fill="#7a2626"/><rect x="83.7" y="25.0" width="0.8" height="1.1" fill="#b09690"/><rect x="10.6" y="15.5" width="1.6" height="1.4" fill="#2a1414"/><rect x="92.8" y="15.1" width="1.0" height="1.6" fill="#2a1414"/><rect x="126.6" y="31.4" width="1.4" height="1.5" fill="#7a2626"/><rect x="80.4" y="33.6" width="1.5" height="1.6" fill="#b09690"/><rect x="104.2" y="32.9" width="1.5" height="1.5" fill="#7a2626"/><rect x="98.3" y="10.3" width="1.4" height="1.6" fill="#5a1f1f"/><rect x="43.8" y="8.0" width="0.8" height="1.4" fill="#7a2626"/><rect x="156.6" y="30.0" width="1.5" height="0.8" fill="#4a1a1a"/><rect x="134.7" y="12.2" width="1.4" height="0.9" fill="#5a1f1f"/><rect x="44.2" y="2.2" width="1.3" height="1.6" fill="#4a1a1a"/><rect x="6.4" y="30.9" width="0.9" height="1.4" fill="#5a1f1f"/><rect x="54.6" y="12.4" width="0.9" height="1.6" fill="#2a1414"/><rect x="33.6" y="31.4" width="1.3" height="0.7" fill="#3d2222"/><rect x="125.0" y="1.1" width="1.2" height="0.8" fill="#2a1414"/><rect x="101.2" y="27.1" width="1.1" height="1.3" fill="#2a1414"/><rect x="94.6" y="8.5" width="1.8" height="1.6" fill="#7c5c56"/><rect x="154.4" y="12.3" width="0.8" height="1.2" fill="#140808"/><rect x="21.5" y="17.0" width="1.5" height="1.2" fill="#b03838"/><rect x="54.9" y="7.1" width="1.0" height="0.9" fill="#4a1a1a"/><rect x="118.2" y="19.3" width="0.9" height="1.5" fill="#4a1a1a"/><rect x="31.6" y="9.9" width="1.5" height="1.8" fill="#2a1414"/><rect x="120.1" y="35.5" width="1.5" height="1.5" fill="#140808"/><rect x="10.1" y="7.7" width="1.6" height="1.5" fill="#5a1f1f"/><rect x="101.2" y="9.9" width="0.9" height="1.4" fill="#9a2c2c"/><rect x="159.2" y="11.4" width="0.9" height="1.1" fill="#5a1f1f"/><rect x="144.4" y="30.1" width="0.8" height="0.8" fill="#4a1a1a"/><rect x="24.7" y="29.1" width="1.8" height="1.7" fill="#4a1a1a"/><rect x="127.6" y="17.8" width="0.8" height="0.8" fill="#3d2222"/><rect x="90.5" y="19.0" width="1.0" height="0.7" fill="#7a2626"/><rect x="146.0" y="26.6" width="1.8" height="1.2" fill="#140808"/><rect x="117.6" y="14.4" width="1.6" height="0.8" fill="#3d2222"/><rect x="2.1" y="8.0" width="1.1" height="0.7" fill="#2a1414"/><rect x="133.3" y="29.4" width="0.7" height="1.7" fill="#4a1a1a"/><rect x="85.8" y="2.7" width="1.4" height="1.7" fill="#9a2c2c"/><rect x="77.8" y="23.9" width="1.0" height="1.7" fill="#7a2626"/><rect x="61.4" y="3.9" width="0.8" height="0.9" fill="#6e3a36"/><rect x="73.3" y="21.9" width="1.5" height="1.2" fill="#6e3a36"/><rect x="10.8" y="27.1" width="1.2" height="1.1" fill="#5a1f1f"/><rect x="108.1" y="26.7" width="1.4" height="1.5" fill="#7a2626"/><rect x="75.8" y="5.3" width="1.4" height="0.8" fill="#b09690"/><rect x="38.3" y="36.9" width="1.1" height="1.6" fill="#7a2626"/><rect x="132.3" y="23.7" width="0.7" height="0.8" fill="#3d2222"/><rect x="156.8" y="30.0" width="0.8" height="1.0" fill="#5a1f1f"/><rect x="149.5" y="8.2" width="1.7" height="1.4" fill="#b03838"/><rect x="147.6" y="9.8" width="0.7" height="1.5" fill="#7a2626"/><rect x="16.7" y="36.4" width="0.9" height="1.6" fill="#b03838"/><rect x="26.1" y="19.2" width="1.6" height="1.7" fill="#5a1f1f"/><rect x="147.2" y="0.1" width="1.3" height="1.6" fill="#7c5c56"/><rect x="80.7" y="23.2" width="1.6" height="0.8" fill="#6e3a36"/><rect x="8.7" y="20.4" width="1.1" height="0.7" fill="#9a2c2c"/><rect x="119.6" y="0.9" width="1.6" height="1.2" fill="#3d2222"/><rect x="19.6" y="24.3" width="1.2" height="0.8" fill="#7a2626"/><rect x="156.8" y="20.4" width="0.8" height="1.5" fill="#9a2c2c"/><rect x="136.5" y="31.7" width="1.1" height="1.0" fill="#5a1f1f"/><rect x="122.4" y="5.5" width="1.8" height="1.5" fill="#6e3a36"/><rect x="1.1" y="2.8" width="1.5" height="1.4" fill="#5a1f1f"/><rect x="83.5" y="17.0" width="1.4" height="1.4" fill="#4a1a1a"/><rect x="147.2" y="27.4" width="1.7" height="1.6" fill="#3d2222"/><rect x="115.1" y="1.1" width="1.6" height="1.2" fill="#b03838"/><rect x="141.0" y="6.7" width="1.2" height="1.5" fill="#140808"/><rect x="40.6" y="11.2" width="1.1" height="0.8" fill="#9a2c2c"/><rect x="71.1" y="36.7" width="1.7" height="1.5" fill="#6e3a36"/><rect x="134.4" y="37.2" width="1.0" height="1.0" fill="#3d2222"/><rect x="66.2" y="0.8" width="1.7" height="1.7" fill="#7a2626"/><rect x="52.8" y="28.8" width="1.7" height="1.6" fill="#3d2222"/><rect x="85.4" y="3.9" width="1.0" height="1.4" fill="#3d2222"/><rect x="59.0" y="20.1" width="0.9" height="1.3" fill="#140808"/><rect x="104.4" y="20.1" width="1.1" height="1.7" fill="#140808"/><rect x="110.8" y="36.2" width="0.9" height="1.0" fill="#5a1f1f"/><rect x="145.6" y="0.5" width="1.5" height="1.8" fill="#7a2626"/><rect x="28.3" y="16.4" width="1.5" height="1.5" fill="#b03838"/><rect x="121.0" y="9.3" width="0.7" height="1.5" fill="#7a2626"/><rect x="33.6" y="9.7" width="1.4" height="1.4" fill="#140808"/><rect x="105.4" y="22.4" width="1.0" height="0.8" fill="#b03838"/><rect x="10.7" y="0.5" width="0.9" height="0.8" fill="#4a1a1a"/><rect x="79.3" y="36.3" width="1.0" height="1.5" fill="#b03838"/><rect x="28.6" y="3.7" width="1.1" height="1.5" fill="#9a2c2c"/><rect x="71.5" y="27.2" width="1.7" height="1.1" fill="#5a1f1f"/><rect x="133.7" y="1.1" width="0.9" height="1.6" fill="#3d2222"/><rect x="128.9" y="25.1" width="0.7" height="0.9" fill="#9a2c2c"/><rect x="145.3" y="5.9" width="1.3" height="1.4" fill="#6e3a36"/><rect x="29.0" y="5.4" width="1.8" height="1.1" fill="#5a1f1f"/><rect x="104.7" y="21.3" width="0.8" height="0.7" fill="#7a2626"/><rect x="136.9" y="4.9" width="1.1" height="1.5" fill="#140808"/><rect x="22.2" y="29.5" width="1.1" height="1.3" fill="#7a2626"/><rect x="17.9" y="9.3" width="1.0" height="1.1" fill="#3d2222"/><rect x="122.8" y="8.4" width="0.9" height="1.1" fill="#7a2626"/><rect x="58.7" y="24.0" width="1.7" height="0.8" fill="#4a1a1a"/><rect x="106.6" y="31.3" width="0.7" height="1.2" fill="#7a2626"/><rect x="18.6" y="17.2" width="0.8" height="0.8" fill="#b03838"/><rect x="77.0" y="6.5" width="1.2" height="0.8" fill="#7a2626"/><rect x="10.9" y="13.5" width="1.7" height="1.3" fill="#4a1a1a"/><rect x="11.5" y="8.3" width="1.3" height="1.7" fill="#3d2222"/><rect x="154.6" y="32.1" width="1.7" height="1.3" fill="#5a1f1f"/><rect x="38.5" y="6.4" width="0.9" height="0.8" fill="#7c5c56"/><rect x="42.6" y="34.6" width="1.5" height="0.8" fill="#4a1a1a"/><rect x="72.8" y="11.9" width="1.4" height="1.1" fill="#7a2626"/><rect x="19.2" y="36.8" width="0.9" height="0.7" fill="#2a1414"/><rect x="104.9" y="19.2" width="1.2" height="1.5" fill="#5a1f1f"/><rect x="86.3" y="8.8" width="1.4" height="1.4" fill="#2a1414"/><rect x="23.3" y="30.1" width="1.5" height="1.6" fill="#140808"/><rect x="59.1" y="33.8" width="0.9" height="1.4" fill="#7a2626"/><rect x="144.8" y="3.1" width="0.7" height="1.2" fill="#7a2626"/><rect x="22.6" y="7.2" width="1.3" height="1.7" fill="#3d2222"/><rect x="64.6" y="25.4" width="1.7" height="1.0" fill="#5a1f1f"/><rect x="76.6" y="19.1" width="1.2" height="1.8" fill="#140808"/><rect x="99.8" y="8.1" width="0.9" height="1.8" fill="#3d2222"/><rect x="73.3" y="8.5" width="1.1" height="1.1" fill="#140808"/><rect x="55.1" y="25.0" width="1.1" height="0.9" fill="#5a1f1f"/><rect x="133.0" y="0.0" width="1.0" height="1.2" fill="#6e3a36"/><rect x="90.2" y="26.6" width="1.0" height="0.8" fill="#7a2626"/><rect x="154.2" y="5.6" width="1.3" height="1.3" fill="#7a2626"/><rect x="142.4" y="2.1" width="0.9" height="1.3" fill="#7a2626"/><rect x="72.7" y="15.3" width="1.4" height="1.6" fill="#7c5c56"/><rect x="153.7" y="10.1" width="1.1" height="0.8" fill="#140808"/><rect x="146.9" y="3.9" width="1.0" height="1.0" fill="#5a1f1f"/><rect x="155.3" y="32.6" width="1.3" height="1.6" fill="#4a1a1a"/><rect x="129.6" y="24.4" width="0.8" height="1.0" fill="#2a1414"/><rect x="105.7" y="21.9" width="1.7" height="1.8" fill="#3d2222"/><rect x="30.9" y="2.8" width="1.3" height="0.9" fill="#b09690"/><rect x="111.2" y="9.6" width="1.1" height="1.3" fill="#7a2626"/><rect x="108.8" y="2.7" width="1.4" height="1.2" fill="#3d2222"/><rect x="107.9" y="29.9" width="1.2" height="1.4" fill="#5a1f1f"/><rect x="113.9" y="24.2" width="1.8" height="1.6" fill="#7a2626"/><rect x="37.4" y="16.1" width="0.9" height="1.2" fill="#140808"/><rect x="154.4" y="33.7" width="1.5" height="1.1" fill="#7a2626"/><rect x="106.5" y="28.7" width="0.9" height="0.9" fill="#7a2626"/><rect x="42.7" y="1.3" width="1.1" height="1.2" fill="#7a2626"/><rect x="12.5" y="21.8" width="1.3" height="1.1" fill="#140808"/><rect x="113.1" y="16.4" width="1.2" height="0.7" fill="#7a2626"/><rect x="108.6" y="6.0" width="1.8" height="1.5" fill="#4a1a1a"/><rect x="134.2" y="24.0" width="1.5" height="1.8" fill="#6e3a36"/><rect x="31.5" y="28.7" width="1.0" height="1.6" fill="#9a2c2c"/><rect x="96.5" y="31.8" width="1.3" height="0.9" fill="#7c5c56"/><rect x="2.4" y="20.0" width="1.0" height="0.8" fill="#b03838"/><rect x="0.8" y="6.5" width="0.7" height="1.0" fill="#b03838"/><rect x="42.6" y="26.6" width="0.7" height="0.8" fill="#140808"/><rect x="150.1" y="36.3" width="1.1" height="1.3" fill="#7a2626"/><rect x="51.4" y="15.6" width="1.0" height="0.8" fill="#4a1a1a"/><rect x="13.5" y="6.1" width="1.4" height="1.5" fill="#5a1f1f"/><rect x="42.2" y="29.6" width="1.1" height="1.2" fill="#3d2222"/><rect x="30.3" y="34.7" width="0.8" height="0.9" fill="#2a1414"/><rect x="111.2" y="14.4" width="1.0" height="1.6" fill="#b03838"/><rect x="128.8" y="3.5" width="0.9" height="1.5" fill="#2a1414"/><rect x="129.1" y="29.6" width="0.8" height="1.4" fill="#7a2626"/><rect x="90.7" y="5.2" width="1.3" height="0.8" fill="#7a2626"/><rect x="101.8" y="9.0" width="1.2" height="1.3" fill="#7a2626"/><rect x="116.3" y="1.2" width="0.9" height="1.0" fill="#b03838"/><rect x="102.8" y="25.9" width="1.7" height="0.9" fill="#6e3a36"/><rect x="50.0" y="24.8" width="0.9" height="0.9" fill="#9a2c2c"/><rect x="123.9" y="30.9" width="1.8" height="1.6" fill="#b03838"/><rect x="49.7" y="11.8" width="0.8" height="1.4" fill="#b03838"/><rect x="14.3" y="1.8" width="0.9" height="1.7" fill="#2a1414"/><rect x="140.9" y="17.3" width="0.8" height="1.3" fill="#7a2626"/><rect x="83.7" y="13.6" width="1.3" height="1.6" fill="#b03838"/><rect x="17.1" y="2.6" width="1.2" height="1.0" fill="#4a1a1a"/><rect x="107.4" y="8.3" width="1.2" height="1.5" fill="#9a2c2c"/><rect x="123.7" y="13.9" width="1.7" height="1.7" fill="#4a1a1a"/><rect x="99.4" y="3.9" width="1.4" height="1.0" fill="#4a1a1a"/><rect x="6.0" y="36.7" width="0.8" height="1.2" fill="#b09690"/><rect x="99.5" y="11.2" width="1.5" height="1.5" fill="#5a1f1f"/><rect x="70.2" y="3.2" width="0.8" height="1.8" fill="#4a1a1a"/><rect x="8.2" y="10.8" width="0.8" height="0.8" fill="#3d2222"/><rect x="11.3" y="6.1" width="1.6" height="0.9" fill="#2a1414"/><rect x="27.9" y="28.6" width="1.1" height="0.8" fill="#4a1a1a"/><rect x="39.0" y="36.3" width="1.0" height="1.5" fill="#5a1f1f"/><rect x="143.2" y="33.8" width="1.8" height="1.4" fill="#4a1a1a"/><rect x="46.4" y="17.4" width="1.5" height="0.8" fill="#b03838"/><rect x="31.1" y="35.8" width="1.6" height="1.1" fill="#5a1f1f"/><rect x="39.8" y="9.5" width="1.8" height="0.9" fill="#4a1a1a"/><rect x="137.2" y="12.0" width="1.5" height="1.1" fill="#7a2626"/><rect x="30.1" y="15.6" width="1.6" height="1.3" fill="#3d2222"/><rect x="1.7" y="28.6" width="1.7" height="1.7" fill="#6e3a36"/><rect x="52.5" y="31.7" width="1.0" height="1.1" fill="#3d2222"/><rect x="60.2" y="13.2" width="0.8" height="0.9" fill="#4a1a1a"/><rect x="146.1" y="15.4" width="1.7" height="1.5" fill="#6e3a36"/><rect x="39.2" y="34.4" width="1.8" height="1.5" fill="#3d2222"/><rect x="121.2" y="30.4" width="1.4" height="1.1" fill="#7a2626"/><rect x="134.9" y="5.0" width="1.1" height="1.6" fill="#2a1414"/><rect x="55.5" y="31.6" width="1.7" height="0.9" fill="#7c5c56"/><rect x="150.7" y="27.8" width="1.4" height="0.8" fill="#b03838"/><rect x="139.7" y="20.5" width="1.1" height="1.6" fill="#4a1a1a"/><rect x="125.6" y="32.5" width="1.1" height="1.0" fill="#7a2626"/><rect x="16.1" y="12.2" width="1.6" height="0.9" fill="#5a1f1f"/><rect x="11.3" y="2.5" width="0.9" height="1.2" fill="#3d2222"/><rect x="64.5" y="30.0" width="1.0" height="1.4" fill="#140808"/><rect x="143.7" y="17.6" width="1.5" height="1.0" fill="#b09690"/><rect x="140.4" y="21.4" width="1.3" height="1.6" fill="#5a1f1f"/><rect x="83.3" y="18.1" width="1.7" height="1.4" fill="#4a1a1a"/><rect x="33.4" y="13.6" width="1.8" height="1.5" fill="#4a1a1a"/><rect x="20.1" y="34.2" width="1.3" height="1.2" fill="#5a1f1f"/><rect x="115.2" y="16.1" width="1.3" height="1.6" fill="#5a1f1f"/><rect x="126.7" y="13.3" width="1.5" height="1.6" fill="#7a2626"/><rect x="35.2" y="33.0" width="1.2" height="1.1" fill="#140808"/><rect x="114.0" y="34.8" width="1.0" height="1.1" fill="#7a2626"/><rect x="117.6" y="7.0" width="1.3" height="1.4" fill="#2a1414"/><rect x="23.0" y="35.8" width="1.3" height="1.6" fill="#140808"/><rect x="29.4" y="34.0" width="1.5" height="1.7" fill="#2a1414"/><rect x="58.1" y="34.6" width="0.7" height="1.3" fill="#7a2626"/><rect x="144.3" y="33.7" width="1.3" height="1.7" fill="#140808"/><rect x="89.9" y="5.4" width="1.6" height="1.2" fill="#6e3a36"/><rect x="96.7" y="9.7" width="1.2" height="1.3" fill="#9a2c2c"/><rect x="75.2" y="3.5" width="1.1" height="1.5" fill="#5a1f1f"/><rect x="120.2" y="8.9" width="1.3" height="0.9" fill="#7a2626"/><rect x="96.8" y="33.8" width="1.3" height="1.5" fill="#7a2626"/><rect x="120.3" y="26.6" width="1.0" height="1.6" fill="#b03838"/><rect x="148.6" y="2.0" width="1.2" height="0.8" fill="#140808"/><rect x="11.2" y="29.8" width="0.9" height="1.2" fill="#b03838"/><rect x="102.6" y="37.3" width="1.5" height="1.0" fill="#9a2c2c"/><rect x="31.9" y="6.0" width="1.4" height="1.0" fill="#4a1a1a"/><rect x="26.0" y="8.2" width="0.9" height="1.0" fill="#5a1f1f"/><rect x="81.0" y="6.9" width="1.2" height="1.8" fill="#2a1414"/><rect x="78.1" y="35.3" width="0.9" height="1.4" fill="#4a1a1a"/><rect x="23.2" y="6.3" width="1.5" height="1.8" fill="#5a1f1f"/><rect x="64.8" y="13.2" width="1.1" height="1.5" fill="#4a1a1a"/><rect x="62.9" y="5.7" width="1.3" height="0.7" fill="#7c5c56"/><rect x="136.4" y="27.2" width="1.4" height="1.7" fill="#9a2c2c"/><rect x="64.5" y="16.2" width="1.3" height="1.4" fill="#9a2c2c"/><rect x="118.0" y="35.5" width="1.1" height="1.6" fill="#7a2626"/><rect x="127.0" y="22.1" width="1.1" height="1.7" fill="#b03838"/><rect x="88.2" y="15.1" width="0.8" height="1.7" fill="#7a2626"/><rect x="128.6" y="1.0" width="1.2" height="1.2" fill="#9a2c2c"/><rect x="58.4" y="33.5" width="1.3" height="1.7" fill="#9a2c2c"/><rect x="102.7" y="17.8" width="1.1" height="1.4" fill="#9a2c2c"/><rect x="126.2" y="9.7" width="1.1" height="1.1" fill="#4a1a1a"/><rect x="146.6" y="20.2" width="1.1" height="1.6" fill="#9a2c2c"/><rect x="25.7" y="25.8" width="0.9" height="0.8" fill="#5a1f1f"/><rect x="129.4" y="5.5" width="0.8" height="1.0" fill="#7a2626"/><rect x="117.8" y="26.9" width="1.7" height="1.3" fill="#b09690"/><rect x="148.1" y="3.4" width="1.2" height="0.9" fill="#140808"/><rect x="120.1" y="32.1" width="0.8" height="1.7" fill="#4a1a1a"/><rect x="121.0" y="22.3" width="0.7" height="0.8" fill="#140808"/><rect x="20.0" y="0.8" width="1.4" height="0.8" fill="#b03838"/><rect x="26.0" y="6.8" width="1.4" height="1.8" fill="#6e3a36"/><rect x="57.9" y="36.6" width="1.1" height="1.0" fill="#4a1a1a"/><rect x="37.4" y="36.5" width="1.5" height="0.9" fill="#140808"/><rect x="28.9" y="5.7" width="1.5" height="0.8" fill="#9a2c2c"/><rect x="85.2" y="25.5" width="1.2" height="1.6" fill="#5a1f1f"/><rect x="92.5" y="16.9" width="1.4" height="1.1" fill="#7c5c56"/><rect x="63.6" y="35.3" width="1.7" height="1.3" fill="#7c5c56"/><rect x="22.9" y="6.5" width="1.5" height="0.7" fill="#4a1a1a"/><rect x="128.8" y="29.4" width="0.7" height="1.6" fill="#2a1414"/><rect x="66.5" y="25.0" width="1.5" height="1.1" fill="#2a1414"/><rect x="154.2" y="35.7" width="1.4" height="1.0" fill="#140808"/><rect x="60.5" y="10.1" width="1.6" height="1.6" fill="#b09690"/><rect x="131.9" y="37.1" width="1.1" height="1.5" fill="#b03838"/><rect x="42.1" y="22.8" width="1.6" height="1.2" fill="#7a2626"/><rect x="44.2" y="34.5" width="1.7" height="1.5" fill="#5a1f1f"/><rect x="23.9" y="28.5" width="1.7" height="1.3" fill="#2a1414"/><rect x="68.6" y="34.9" width="1.6" height="0.8" fill="#5a1f1f"/><rect x="44.4" y="4.3" width="1.2" height="1.5" fill="#7c5c56"/><rect x="41.2" y="27.3" width="0.8" height="1.2" fill="#6e3a36"/><rect x="115.9" y="8.0" width="1.0" height="1.1" fill="#6e3a36"/><rect x="147.7" y="35.3" width="1.2" height="1.3" fill="#140808"/><rect x="129.8" y="28.4" width="1.6" height="1.1" fill="#4a1a1a"/><rect x="152.6" y="17.7" width="1.5" height="0.9" fill="#5a1f1f"/><rect x="109.1" y="2.0" width="1.3" height="1.5" fill="#140808"/><rect x="21.1" y="23.8" width="1.0" height="1.6" fill="#4a1a1a"/><rect x="5.3" y="17.9" width="1.6" height="1.7" fill="#5a1f1f"/><rect x="5.5" y="17.4" width="1.5" height="1.5" fill="#4a1a1a"/><rect x="55.1" y="34.9" width="0.9" height="1.6" fill="#7a2626"/><rect x="19.3" y="7.0" width="1.1" height="0.9" fill="#2a1414"/><rect x="149.3" y="17.7" width="1.0" height="1.7" fill="#3d2222"/><rect x="35.5" y="33.9" width="1.8" height="1.5" fill="#6e3a36"/><rect x="101.3" y="19.9" width="1.2" height="0.8" fill="#7c5c56"/><rect x="146.7" y="30.1" width="1.5" height="1.0" fill="#b03838"/><rect x="74.4" y="30.8" width="1.7" height="0.9" fill="#140808"/><rect x="109.8" y="20.7" width="0.9" height="0.9" fill="#4a1a1a"/><rect x="75.5" y="18.4" width="1.1" height="1.3" fill="#9a2c2c"/><rect x="122.4" y="22.0" width="1.7" height="1.1" fill="#7a2626"/><rect x="154.1" y="36.7" width="1.3" height="1.8" fill="#7a2626"/><rect x="61.8" y="20.5" width="0.7" height="0.9" fill="#9a2c2c"/><rect x="19.9" y="10.6" width="1.3" height="1.7" fill="#6e3a36"/><rect x="110.1" y="13.6" width="1.4" height="1.3" fill="#140808"/><rect x="138.5" y="25.1" width="1.4" height="1.0" fill="#4a1a1a"/><rect x="155.7" y="9.1" width="0.8" height="0.7" fill="#140808"/><rect x="88.8" y="7.7" width="0.8" height="1.6" fill="#2a1414"/><rect x="107.5" y="25.6" width="1.8" height="1.4" fill="#140808"/><rect x="114.5" y="0.1" width="1.2" height="1.8" fill="#5a1f1f"/><rect x="50.3" y="21.3" width="1.2" height="1.7" fill="#5a1f1f"/><rect x="94.7" y="30.8" width="0.9" height="0.9" fill="#5a1f1f"/><rect x="133.7" y="3.8" width="1.0" height="1.7" fill="#140808"/><rect x="82.8" y="12.1" width="1.1" height="1.5" fill="#140808"/><rect x="10.8" y="31.1" width="0.8" height="1.5" fill="#140808"/><rect x="43.4" y="5.5" width="1.4" height="1.7" fill="#4a1a1a"/><rect x="159.6" y="37.2" width="1.4" height="0.9" fill="#6e3a36"/><rect x="116.6" y="20.6" width="1.7" height="1.0" fill="#4a1a1a"/><rect x="22.8" y="5.9" width="1.3" height="1.6" fill="#7a2626"/><rect x="25.7" y="18.8" width="1.3" height="1.2" fill="#2a1414"/><rect x="87.3" y="0.6" width="1.2" height="1.0" fill="#5a1f1f"/><rect x="121.5" y="9.0" width="1.0" height="0.8" fill="#3d2222"/><rect x="76.7" y="14.5" width="1.5" height="0.9" fill="#9a2c2c"/><rect x="107.6" y="31.2" width="1.3" height="1.7" fill="#4a1a1a"/><rect x="97.0" y="6.8" width="0.8" height="1.1" fill="#5a1f1f"/><rect x="14.3" y="24.3" width="1.0" height="1.3" fill="#4a1a1a"/><rect x="150.4" y="9.1" width="1.0" height="1.1" fill="#7a2626"/><rect x="146.1" y="26.4" width="0.9" height="0.7" fill="#4a1a1a"/><rect x="19.7" y="31.7" width="0.9" height="1.4" fill="#6e3a36"/><rect x="9.4" y="19.0" width="0.8" height="1.5" fill="#9a2c2c"/><rect x="115.1" y="19.1" width="1.4" height="1.2" fill="#7a2626"/><rect x="106.2" y="3.4" width="0.7" height="0.9" fill="#b09690"/><rect x="64.0" y="7.4" width="1.5" height="1.8" fill="#5a1f1f"/><rect x="53.8" y="10.0" width="0.9" height="1.1" fill="#6e3a36"/><rect x="110.6" y="16.1" width="0.8" height="1.3" fill="#7a2626"/><rect x="159.1" y="34.4" width="1.3" height="1.2" fill="#5a1f1f"/><rect x="31.2" y="25.1" width="1.6" height="1.0" fill="#2a1414"/><rect x="150.0" y="30.5" width="0.9" height="1.2" fill="#4a1a1a"/><rect x="20.4" y="25.6" width="1.3" height="1.8" fill="#b03838"/><rect x="7.3" y="26.8" width="0.8" height="1.1" fill="#3d2222"/><rect x="8.6" y="21.8" width="1.1" height="1.5" fill="#b03838"/><rect x="58.9" y="26.6" width="1.8" height="1.2" fill="#9a2c2c"/><rect x="0.6" y="3.4" width="1.7" height="1.4" fill="#3d2222"/><rect x="25.0" y="32.6" width="0.8" height="1.1" fill="#b03838"/><rect x="107.8" y="0.1" width="1.1" height="1.7" fill="#5a1f1f"/><rect x="160.0" y="11.9" width="1.6" height="1.7" fill="#b09690"/><rect x="94.5" y="36.3" width="1.7" height="1.3" fill="#6e3a36"/><rect x="31.6" y="19.4" width="1.1" height="1.1" fill="#2a1414"/><rect x="82.0" y="22.0" width="1.0" height="1.3" fill="#7a2626"/><rect x="80.9" y="15.7" width="0.9" height="1.3" fill="#6e3a36"/><rect x="44.3" y="28.8" width="1.6" height="1.3" fill="#b03838"/><rect x="40.0" y="34.6" width="1.1" height="1.0" fill="#2a1414"/><rect x="64.6" y="26.5" width="1.2" height="1.5" fill="#3d2222"/><rect x="34.2" y="16.9" width="1.0" height="1.1" fill="#4a1a1a"/><rect x="121.2" y="27.4" width="1.0" height="1.6" fill="#7a2626"/><rect x="105.1" y="25.3" width="1.5" height="1.0" fill="#6e3a36"/><rect x="9.8" y="13.5" width="1.8" height="1.3" fill="#5a1f1f"/><rect x="107.6" y="36.1" width="1.0" height="1.1" fill="#3d2222"/><rect x="17.4" y="29.8" width="1.2" height="1.1" fill="#3d2222"/><rect x="43.3" y="18.2" width="1.7" height="1.6" fill="#b03838"/><rect x="139.3" y="16.4" width="1.0" height="1.8" fill="#4a1a1a"/><rect x="29.4" y="5.9" width="1.7" height="1.6" fill="#9a2c2c"/><rect x="53.2" y="31.9" width="1.2" height="0.9" fill="#b09690"/><rect x="124.1" y="14.0" width="1.7" height="1.2" fill="#5a1f1f"/><rect x="63.8" y="22.3" width="0.7" height="1.1" fill="#7a2626"/><rect x="60.9" y="0.4" width="1.5" height="1.1" fill="#4a1a1a"/><rect x="109.1" y="23.4" width="0.7" height="1.4" fill="#7a2626"/><rect x="98.1" y="11.0" width="1.6" height="1.7" fill="#7a2626"/><rect x="37.5" y="21.9" width="1.1" height="0.7" fill="#2a1414"/><rect x="52.2" y="24.1" width="1.3" height="0.8" fill="#6e3a36"/><rect x="34.2" y="11.6" width="1.1" height="1.7" fill="#4a1a1a"/><rect x="18.6" y="36.9" width="1.6" height="1.0" fill="#7a2626"/><rect x="94.3" y="14.1" width="1.6" height="1.6" fill="#5a1f1f"/><rect x="43.2" y="29.0" width="1.8" height="0.8" fill="#4a1a1a"/><rect x="61.1" y="8.5" width="1.6" height="1.6" fill="#6e3a36"/><rect x="88.1" y="14.5" width="0.8" height="1.0" fill="#3d2222"/><rect x="120.9" y="16.5" width="0.8" height="1.2" fill="#140808"/><rect x="34.1" y="0.1" width="0.8" height="1.1" fill="#5a1f1f"/><rect x="69.5" y="19.0" width="1.5" height="1.3" fill="#9a2c2c"/><rect x="157.7" y="6.3" width="1.2" height="1.1" fill="#2a1414"/><rect x="138.3" y="7.8" width="1.1" height="1.1" fill="#7c5c56"/><rect x="98.7" y="21.1" width="0.8" height="1.8" fill="#9a2c2c"/><rect x="59.3" y="4.3" width="1.3" height="1.1" fill="#6e3a36"/><rect x="52.7" y="31.6" width="1.2" height="1.8" fill="#9a2c2c"/><rect x="58.0" y="15.0" width="1.4" height="1.4" fill="#7a2626"/><rect x="71.7" y="15.2" width="1.6" height="1.2" fill="#7a2626"/><rect x="133.6" y="14.0" width="0.7" height="0.9" fill="#3d2222"/><rect x="154.3" y="25.5" width="1.2" height="1.2" fill="#b03838"/><rect x="31.7" y="6.5" width="1.5" height="1.0" fill="#6e3a36"/><rect x="103.5" y="5.1" width="0.9" height="1.3" fill="#6e3a36"/><rect x="50.4" y="20.6" width="1.2" height="1.4" fill="#7a2626"/><rect x="21.6" y="11.5" width="1.3" height="1.4" fill="#b03838"/><rect x="125.3" y="21.4" width="1.2" height="1.6" fill="#7a2626"/><rect x="91.0" y="28.2" width="1.2" height="1.8" fill="#4a1a1a"/><rect x="132.0" y="24.4" width="1.4" height="0.7" fill="#5a1f1f"/><rect x="150.0" y="36.4" width="1.0" height="1.6" fill="#3d2222"/><rect x="28.5" y="31.0" width="0.7" height="1.7" fill="#2a1414"/><rect x="70.7" y="31.0" width="1.3" height="1.6" fill="#b03838"/><rect x="32.6" y="33.6" width="0.7" height="1.1" fill="#9a2c2c"/><rect x="10.6" y="2.7" width="0.8" height="0.9" fill="#6e3a36"/><rect x="47.0" y="10.4" width="1.7" height="1.7" fill="#140808"/><path d="M11 37.6 L24 0 L27.5 0 L18 37.6Z" fill="#4a3c3a" opacity="0.8"/><rect x="23.7" y="1.0" width="3.6" height="0.6" fill="#857572" opacity="0.6"/><rect x="22.6" y="4.1" width="3.9" height="0.6" fill="#857572" opacity="0.6"/><rect x="21.5" y="7.2" width="4.2" height="0.6" fill="#857572" opacity="0.6"/><rect x="20.4" y="10.3" width="4.5" height="0.6" fill="#857572" opacity="0.6"/><rect x="19.4" y="13.4" width="4.7" height="0.6" fill="#857572" opacity="0.6"/><rect x="18.3" y="16.5" width="5.0" height="0.6" fill="#857572" opacity="0.6"/><rect x="17.2" y="19.6" width="5.3" height="0.6" fill="#857572" opacity="0.6"/><rect x="16.2" y="22.7" width="5.6" height="0.6" fill="#857572" opacity="0.6"/><rect x="15.1" y="25.8" width="5.9" height="0.6" fill="#857572" opacity="0.6"/><rect x="14.0" y="28.9" width="6.2" height="0.6" fill="#857572" opacity="0.6"/><rect x="12.9" y="32.0" width="6.5" height="0.6" fill="#857572" opacity="0.6"/><rect x="11.9" y="35.1" width="6.8" height="0.6" fill="#857572" opacity="0.6"/><path d="M101 37.6 L101.5 0 L108 0 L108.5 37.6Z" fill="#3e3432" opacity="0.8"/><rect x="100.8" y="1.0" width="8" height="0.6" fill="#7a6a66" opacity="0.5"/><rect x="100.8" y="4.1" width="8" height="0.6" fill="#7a6a66" opacity="0.5"/><rect x="100.8" y="7.2" width="8" height="0.6" fill="#7a6a66" opacity="0.5"/><rect x="100.8" y="10.3" width="8" height="0.6" fill="#7a6a66" opacity="0.5"/><rect x="100.8" y="13.4" width="8" height="0.6" fill="#7a6a66" opacity="0.5"/><rect x="100.8" y="16.5" width="8" height="0.6" fill="#7a6a66" opacity="0.5"/><rect x="100.8" y="19.6" width="8" height="0.6" fill="#7a6a66" opacity="0.5"/><rect x="100.8" y="22.7" width="8" height="0.6" fill="#7a6a66" opacity="0.5"/><rect x="100.8" y="25.8" width="8" height="0.6" fill="#7a6a66" opacity="0.5"/><rect x="100.8" y="28.9" width="8" height="0.6" fill="#7a6a66" opacity="0.5"/><rect x="100.8" y="32.0" width="8" height="0.6" fill="#7a6a66" opacity="0.5"/><rect x="100.8" y="35.1" width="8" height="0.6" fill="#7a6a66" opacity="0.5"/><circle cx="62" cy="31" r="1.8" fill="#e23a48"/><circle cx="140" cy="9.5" r="1.6" fill="#2f6fc6"/><circle cx="142" cy="9" r="1.3" fill="#e8a13a"/><circle cx="143.5" cy="10" r="1.2" fill="#3aa04a"/><rect x="146" y="8" width="10" height="2.5" fill="#c9c4c8" opacity="0.6"/><rect x="143" y="31" width="16" height="4" fill="#b59a3a" opacity="0.5"/><rect x="0" y="37.4" width="160.6" height="8.6" fill="#1e3673"/><rect x="0.5" y="40.2" width="12" height="2.4" fill="#c4552c" opacity="0.85"/><rect x="18" y="39.8" width="25" height="3.2" fill="#dcd8ee" opacity="0.4"/><rect x="50" y="39.8" width="21" height="3.2" fill="#d8dbee" opacity="0.35"/><rect x="76" y="38.8" width="25" height="2.2" fill="#c8d0ea" opacity="0.35"/><rect x="81" y="41.8" width="14" height="2" fill="#c8d0ea" opacity="0.4"/><rect x="114" y="38.8" width="25" height="2.2" fill="#c8d0ea" opacity="0.35"/><rect x="118" y="41.8" width="14" height="2" fill="#c8d0ea" opacity="0.4"/><rect x="144" y="39.8" width="16" height="3" fill="#c8d0ea" opacity="0.35"/><rect x="0" y="46" width="160.6" height="13.4" fill="#284894"/><rect x="40.4" y="49.3" width="52" height="3.2" fill="#5f80d0"/><rect x="58" y="49.8" width="30" height="2.2" fill="#c6d0f0" opacity="0.7"/><rect x="113" y="49.3" width="47" height="3" fill="#4d6ec0"/><rect x="116" y="49.8" width="16" height="2" fill="#d8a060" opacity="0.7"/><rect x="0" y="59.3" width="160.6" height="54.4" fill="#294a96"/><path d="M23.8 59.3 L160.6 59.3 L160.6 91 L2.6 91Z" fill="#dba979"/><path d="M23.8 59.3 L160.6 59.3" stroke="#e9d6c0" stroke-width="0.5"/><path d="M78.7 59.3 L73.2 91.6" stroke="#f3efe8" stroke-width="0.8"/><path d="M73.2 91.6 L72 100" stroke="#dfe4f2" stroke-width="0.6" stroke-dasharray="1 0.8"/><path d="M133.6 58.8 L147.4 101" stroke="#e6e9f2" stroke-width="0.7" stroke-dasharray="2 0.6"/><path d="M0 99.7 H73" stroke="#dfe4f2" stroke-width="0.5" stroke-dasharray="1.1 0.9"/><rect x="108.3" y="25" width="2" height="76" fill="#26262e"/><rect x="106" y="40" width="1" height="50" fill="#9aa0b0" opacity="0.5"/><ellipse cx="40.9" cy="59.5" rx="0.9" ry="0.9" fill="#c98e6e"/><rect x="39.4" y="60.3" width="3.0" height="3.4" rx="0.5" fill="#1d2240"/><rect x="39.9" y="63.7" width="2.1" height="4.7" fill="#c98e6e" opacity="0.85"/><ellipse cx="61.0" cy="54.2" rx="0.9" ry="0.9" fill="#c98e6e"/><rect x="59.5" y="55.0" width="3.0" height="3.8" rx="0.5" fill="#8e2a36"/><rect x="60.0" y="58.8" width="2.1" height="5.2" fill="#c98e6e" opacity="0.85"/><ellipse cx="45.6" cy="65.9" rx="1.2" ry="0.9" fill="#c98e6e"/><rect x="43.6" y="66.7" width="4.0" height="7.6" rx="0.5" fill="#1d2240"/><rect x="44.2" y="74.3" width="2.8" height="10.5" fill="#c98e6e" opacity="0.85"/><ellipse cx="89.5" cy="56.3" rx="1.3" ry="0.9" fill="#c98e6e"/><rect x="87.2" y="57.1" width="4.5" height="6.8" rx="0.5" fill="#1d2240"/><rect x="87.9" y="63.9" width="3.1" height="9.4" fill="#c98e6e" opacity="0.85"/><ellipse cx="102.5" cy="68.0" rx="1.5" ry="0.9" fill="#c98e6e"/><rect x="100.0" y="68.8" width="5.0" height="6.8" rx="0.5" fill="#15151f"/><rect x="100.8" y="75.6" width="3.5" height="9.4" fill="#c98e6e" opacity="0.85"/><ellipse cx="112.6" cy="61.8" rx="1.2" ry="0.9" fill="#c98e6e"/><rect x="110.6" y="62.6" width="4.0" height="5.6" rx="0.5" fill="#8e2a36"/><rect x="111.2" y="68.2" width="2.8" height="7.7" fill="#c98e6e" opacity="0.85"/><ellipse cx="116.2" cy="72.8" rx="1.3" ry="0.9" fill="#c98e6e"/><rect x="114.0" y="73.6" width="4.5" height="7.2" rx="0.5" fill="#8e2a36"/><rect x="114.7" y="80.8" width="3.1" height="9.9" fill="#c98e6e" opacity="0.85"/><ellipse cx="118.8" cy="52.8" rx="1.1" ry="0.9" fill="#c98e6e"/><rect x="117.0" y="53.6" width="3.5" height="3.6" rx="0.5" fill="#8e2a36"/><rect x="117.5" y="57.2" width="2.4" height="5.0" fill="#c98e6e" opacity="0.85"/><ellipse cx="142.8" cy="51.0" rx="1.0" ry="0.9" fill="#c98e6e"/><rect x="141.2" y="51.8" width="3.3" height="4.2" rx="0.5" fill="#8e2a36"/><rect x="141.7" y="56.0" width="2.3" height="5.8" fill="#c98e6e" opacity="0.85"/><ellipse cx="146.6" cy="65.8" rx="1.3" ry="0.9" fill="#c98e6e"/><rect x="144.5" y="66.6" width="4.2" height="5.6" rx="0.5" fill="#8e2a36"/><rect x="145.1" y="72.2" width="2.9" height="7.7" fill="#c98e6e" opacity="0.85"/><rect x="155" y="80" width="6" height="25.6" fill="#14141a"/><ellipse cx="158" cy="79.5" rx="1.5" ry="1.6" fill="#b08060"/><rect x="98.5" y="89" width="5.5" height="16.6" fill="#14141a"/><ellipse cx="101.2" cy="88.6" rx="1.4" ry="1.5" fill="#b08060"/><rect x="18.1" y="88" width="42.5" height="10.7" fill="#1a2545"/><rect x="18.1" y="88" width="42.5" height="1" fill="#0f1730"/><rect x="20" y="89.7" width="20" height="1.5" fill="#d4daea"/><rect x="20" y="94.1" width="25" height="1.5" fill="#d4daea"/><rect x="49" y="89.3" width="4" height="8" fill="#2c3a60"/><rect x="54" y="89.3" width="5.5" height="8.3" fill="#dfe3ee" opacity="0.8"/><rect x="16.9" y="103" width="7.5" height="10.6" rx="1.5" fill="#15151c"/><rect x="29.7" y="104" width="8.5" height="9.6" rx="1.5" fill="#15151c"/><rect x="65.8" y="101" width="7.4" height="12.6" rx="1.5" fill="#16161e"/><rect x="146.8" y="107" width="8.5" height="6.6" rx="1.5" fill="#15151c"/><rect x="79" y="110" width="4.0" height="3.6" rx="1.5" fill="#15151c"/><rect x="135" y="109" width="4.0" height="4.6" rx="1.5" fill="#15151c"/><rect x="85.9" y="108.6" width="6.1" height="5.0" rx="1.2" fill="#e4e4ea"/><rect x="93" y="109.5" width="5.7" height="4.1" rx="1.2" fill="#e4e4ea"/><rect x="102.9" y="108.8" width="7.1" height="4.8" rx="1.2" fill="#e4e4ea"/><rect x="112" y="109.2" width="10.0" height="4.4" rx="1.2" fill="#e4e4ea"/><rect x="125.4" y="109.5" width="8.5" height="4.1" rx="1.2" fill="#e4e4ea"/><rect x="0" y="113.6" width="160.6" height="23.9" fill="#0c0c0d"/><rect x="4" y="119.2" width="24" height="1.3" fill="#9a9aa0" opacity="0.75"/><rect x="147" y="119.2" width="10" height="1.3" fill="#9a9aa0" opacity="0.75"/><rect x="6.3" y="127.5" width="150.5" height="0.8" fill="#c4c4c8"/><circle cx="6.6" cy="127.9" r="0.9" fill="#e0e0e0"/><path d="M6 132.9 L8.4 134.4 L6 135.9Z" fill="#dcdcdc"/><path d="M145.8 133.5 h1.2 l1.6 -1.3 v4.2 l-1.6 -1.3 h-1.2Z" fill="#dcdcdc"/><path d="M154.3 133.5 v-0.9 h0.9 M156.4 132.6 h0.9 v0.9 M157.3 135.1 v0.9 h-0.9 M155.2 136 h-0.9 v-0.9" fill="none" stroke="#dcdcdc" stroke-width="0.5"/></svg>
</div>

<svg class="a" style="left:0;top:0" width="800" height="410" viewBox="0 0 800 410"><path d="M108.1 197.25 H765.25 A3 3 0 0 1 768.25 200.25 V360.2 H597.25 V216.3 H108.1 A3 3 0 0 1 105.1 213.3 V200.25 A3 3 0 0 1 108.1 197.25 Z" fill="none" stroke="#4636d0" stroke-width="1.3"/></svg>
</body></html>
